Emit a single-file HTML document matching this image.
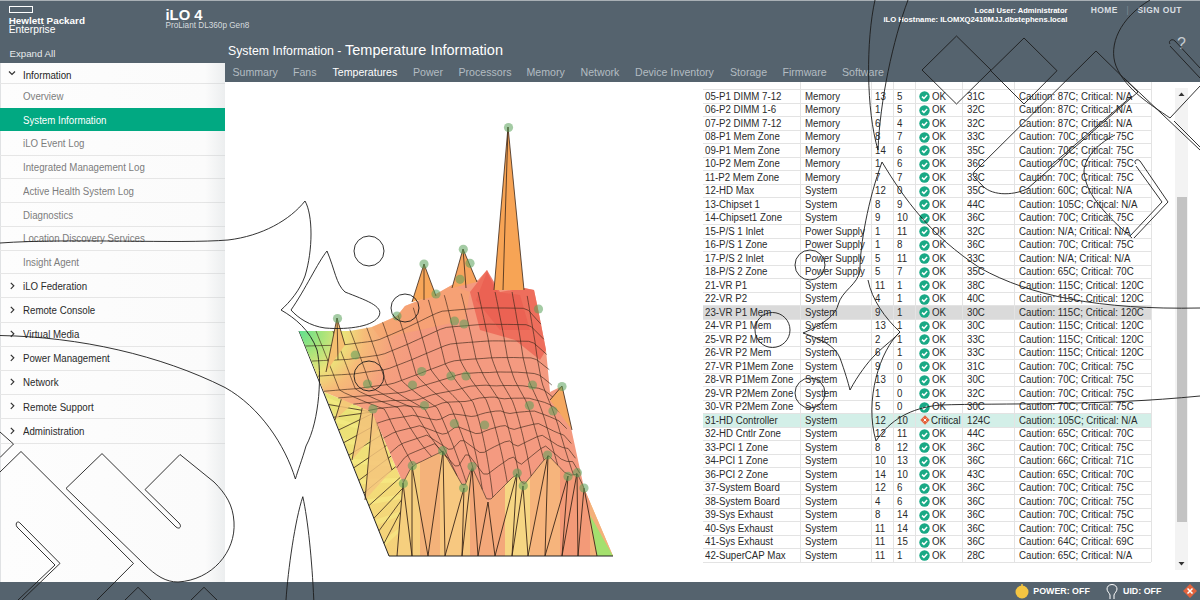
<!DOCTYPE html>
<html><head><meta charset="utf-8">
<style>
*{margin:0;padding:0;box-sizing:border-box}
html,body{width:1200px;height:600px;overflow:hidden;background:#fff;font-family:"Liberation Sans",sans-serif}
.a{position:absolute}
</style></head><body>
<div class="a" style="left:0;top:0;width:1200px;height:63px;background:#55636e"></div>
<div class="a" style="left:0;top:0;width:1200px;height:1px;background:#a9b0b5"></div>
<div class="a" style="left:225px;top:63px;width:975px;height:19px;background:#55636e"></div>
<div class="a" style="left:0;top:582px;width:1200px;height:18px;background:#55636e"></div>
<div class="a" style="left:0;top:63px;width:225px;height:519px;background:linear-gradient(to right,#fdfdfd 0,#fbfbfb 205px,#eceeef 225px)"></div>
<div class="a" style="left:0;top:63px;width:1px;height:519px;background:#e0e2e4"></div>
<div style="position:absolute;left:0;top:108px;width:225px;height:23px;background:#01a982"></div>
<div style="position:absolute;left:0;top:82.5px;width:225px;height:1px;background:linear-gradient(to right,#e6e6e6,#e6e6e6 200px,#dcdedf)"></div>
<div style="position:absolute;left:0;top:154.5px;width:225px;height:1px;background:linear-gradient(to right,#e6e6e6,#e6e6e6 200px,#dcdedf)"></div>
<div style="position:absolute;left:0;top:178.25px;width:225px;height:1px;background:linear-gradient(to right,#e6e6e6,#e6e6e6 200px,#dcdedf)"></div>
<div style="position:absolute;left:0;top:202.0px;width:225px;height:1px;background:linear-gradient(to right,#e6e6e6,#e6e6e6 200px,#dcdedf)"></div>
<div style="position:absolute;left:0;top:225.5px;width:225px;height:1px;background:linear-gradient(to right,#e6e6e6,#e6e6e6 200px,#dcdedf)"></div>
<div style="position:absolute;left:0;top:249.5px;width:225px;height:1px;background:linear-gradient(to right,#e6e6e6,#e6e6e6 200px,#dcdedf)"></div>
<div style="position:absolute;left:0;top:273.25px;width:225px;height:1px;background:linear-gradient(to right,#e6e6e6,#e6e6e6 200px,#dcdedf)"></div>
<div style="position:absolute;left:0;top:297.0px;width:225px;height:1px;background:linear-gradient(to right,#e6e6e6,#e6e6e6 200px,#dcdedf)"></div>
<div style="position:absolute;left:0;top:321.5px;width:225px;height:1px;background:linear-gradient(to right,#e6e6e6,#e6e6e6 200px,#dcdedf)"></div>
<div style="position:absolute;left:0;top:345.75px;width:225px;height:1px;background:linear-gradient(to right,#e6e6e6,#e6e6e6 200px,#dcdedf)"></div>
<div style="position:absolute;left:0;top:369.5px;width:225px;height:1px;background:linear-gradient(to right,#e6e6e6,#e6e6e6 200px,#dcdedf)"></div>
<div style="position:absolute;left:0;top:393.75px;width:225px;height:1px;background:linear-gradient(to right,#e6e6e6,#e6e6e6 200px,#dcdedf)"></div>
<div style="position:absolute;left:0;top:417.75px;width:225px;height:1px;background:linear-gradient(to right,#e6e6e6,#e6e6e6 200px,#dcdedf)"></div>
<div style="position:absolute;left:0;top:442.8px;width:225px;height:1px;background:linear-gradient(to right,#e6e6e6,#e6e6e6 200px,#dcdedf)"></div>
<div style="position:absolute;left:23px;top:70.82px;font-size:10.21px;line-height:10.21px;color:#1e1e1e;white-space:nowrap;transform:scaleX(0.9500);transform-origin:0 0;">Information</div>
<svg style="position:absolute;left:7px;top:70.0px" width="10" height="7"><path d="M2 1.5 L5 4.5 L8 1.5" fill="none" stroke="#333" stroke-width="1.2"/></svg>
<div style="position:absolute;left:23px;top:91.82px;font-size:10.21px;line-height:10.21px;color:#7c7c7c;white-space:nowrap;transform:scaleX(0.9500);transform-origin:0 0;">Overview</div>
<div style="position:absolute;left:23px;top:115.82px;font-size:10.21px;line-height:10.21px;color:#ffffff;white-space:nowrap;transform:scaleX(0.9500);transform-origin:0 0;">System Information</div>
<div style="position:absolute;left:23px;top:139.32px;font-size:10.21px;line-height:10.21px;color:#7c7c7c;white-space:nowrap;transform:scaleX(0.9500);transform-origin:0 0;">iLO Event Log</div>
<div style="position:absolute;left:23px;top:163.20px;font-size:10.21px;line-height:10.21px;color:#7c7c7c;white-space:nowrap;transform:scaleX(0.9500);transform-origin:0 0;">Integrated Management Log</div>
<div style="position:absolute;left:23px;top:186.95px;font-size:10.21px;line-height:10.21px;color:#7c7c7c;white-space:nowrap;transform:scaleX(0.9500);transform-origin:0 0;">Active Health System Log</div>
<div style="position:absolute;left:23px;top:210.57px;font-size:10.21px;line-height:10.21px;color:#7c7c7c;white-space:nowrap;transform:scaleX(0.9500);transform-origin:0 0;">Diagnostics</div>
<div style="position:absolute;left:23px;top:234.32px;font-size:10.21px;line-height:10.21px;color:#7c7c7c;white-space:nowrap;transform:scaleX(0.9500);transform-origin:0 0;">Location Discovery Services</div>
<div style="position:absolute;left:23px;top:258.20px;font-size:10.21px;line-height:10.21px;color:#7c7c7c;white-space:nowrap;transform:scaleX(0.9500);transform-origin:0 0;">Insight Agent</div>
<div style="position:absolute;left:23px;top:281.95px;font-size:10.21px;line-height:10.21px;color:#2a2a2a;white-space:nowrap;transform:scaleX(0.9500);transform-origin:0 0;">iLO Federation</div>
<svg style="position:absolute;left:9px;top:280.625px" width="7" height="10"><path d="M1.8 1.8 L4.8 4.8 L1.8 7.8" fill="none" stroke="#333" stroke-width="1.2"/></svg>
<div style="position:absolute;left:23px;top:306.07px;font-size:10.21px;line-height:10.21px;color:#2a2a2a;white-space:nowrap;transform:scaleX(0.9500);transform-origin:0 0;">Remote Console</div>
<svg style="position:absolute;left:9px;top:304.75px" width="7" height="10"><path d="M1.8 1.8 L4.8 4.8 L1.8 7.8" fill="none" stroke="#333" stroke-width="1.2"/></svg>
<div style="position:absolute;left:23px;top:330.45px;font-size:10.21px;line-height:10.21px;color:#2a2a2a;white-space:nowrap;transform:scaleX(0.9500);transform-origin:0 0;">Virtual Media</div>
<svg style="position:absolute;left:9px;top:329.125px" width="7" height="10"><path d="M1.8 1.8 L4.8 4.8 L1.8 7.8" fill="none" stroke="#333" stroke-width="1.2"/></svg>
<div style="position:absolute;left:23px;top:354.45px;font-size:10.21px;line-height:10.21px;color:#2a2a2a;white-space:nowrap;transform:scaleX(0.9500);transform-origin:0 0;">Power Management</div>
<svg style="position:absolute;left:9px;top:353.125px" width="7" height="10"><path d="M1.8 1.8 L4.8 4.8 L1.8 7.8" fill="none" stroke="#333" stroke-width="1.2"/></svg>
<div style="position:absolute;left:23px;top:378.45px;font-size:10.21px;line-height:10.21px;color:#2a2a2a;white-space:nowrap;transform:scaleX(0.9500);transform-origin:0 0;">Network</div>
<svg style="position:absolute;left:9px;top:377.125px" width="7" height="10"><path d="M1.8 1.8 L4.8 4.8 L1.8 7.8" fill="none" stroke="#333" stroke-width="1.2"/></svg>
<div style="position:absolute;left:23px;top:402.57px;font-size:10.21px;line-height:10.21px;color:#2a2a2a;white-space:nowrap;transform:scaleX(0.9500);transform-origin:0 0;">Remote Support</div>
<svg style="position:absolute;left:9px;top:401.25px" width="7" height="10"><path d="M1.8 1.8 L4.8 4.8 L1.8 7.8" fill="none" stroke="#333" stroke-width="1.2"/></svg>
<div style="position:absolute;left:23px;top:427.10px;font-size:10.21px;line-height:10.21px;color:#2a2a2a;white-space:nowrap;transform:scaleX(0.9500);transform-origin:0 0;">Administration</div>
<svg style="position:absolute;left:9px;top:425.775px" width="7" height="10"><path d="M1.8 1.8 L4.8 4.8 L1.8 7.8" fill="none" stroke="#333" stroke-width="1.2"/></svg>
<div class="a" style="left:9px;top:6.2px;width:23.5px;height:6.8px;border:1.5px solid #fff"></div>
<div style="position:absolute;left:8.7px;top:15.58px;font-size:9.90px;line-height:9.90px;color:#fff;font-weight:bold;white-space:nowrap;">Hewlett Packard</div>
<div style="position:absolute;left:8.7px;top:25.29px;font-size:10.25px;line-height:10.25px;color:#fff;white-space:nowrap;">Enterprise</div>
<div style="position:absolute;left:9.5px;top:49.26px;font-size:9.70px;line-height:9.70px;color:#e8ebed;white-space:nowrap;">Expand All</div>
<div style="position:absolute;left:165.5px;top:7.62px;font-size:14.80px;line-height:14.80px;color:#fff;font-weight:bold;white-space:nowrap;">iLO 4</div>
<div style="position:absolute;left:165.5px;top:22.33px;font-size:8.20px;line-height:8.20px;color:#d6dbde;white-space:nowrap;">ProLiant DL360p Gen8</div>
<div style="position:absolute;right:132.5px;text-align:right;top:6.54px;font-size:7.60px;line-height:7.60px;color:#fff;font-weight:bold;white-space:nowrap;">Local User: Administrator</div>
<div style="position:absolute;right:132.5px;text-align:right;top:15.96px;font-size:7.70px;line-height:7.70px;color:#fff;font-weight:bold;white-space:nowrap;">iLO Hostname: ILOMXQ2410MJJ.dbstephens.local</div>
<div style="position:absolute;left:1090.75px;top:5.78px;font-size:8.50px;line-height:8.50px;color:#d9dee1;font-weight:bold;white-space:nowrap;letter-spacing:0.4px">HOME</div>
<div style="position:absolute;left:1126.5px;top:5.78px;font-size:8.50px;line-height:8.50px;color:#7d8a92;white-space:nowrap;">|</div>
<div style="position:absolute;left:1137.5px;top:5.78px;font-size:8.50px;line-height:8.50px;color:#d9dee1;font-weight:bold;white-space:nowrap;letter-spacing:0.4px">SIGN OUT</div>
<div style="position:absolute;left:1177px;top:36.40px;font-size:16.00px;line-height:16.00px;color:#c5ccd1;white-space:nowrap;">?</div>
<div style="position:absolute;left:228px;top:45.05px;font-size:12.30px;line-height:12.30px;color:#fff;white-space:nowrap;">System Information - </div>
<div style="position:absolute;left:345px;top:43.17px;font-size:14.50px;line-height:14.50px;color:#fff;white-space:nowrap;">Temperature Information</div>
<div style="position:absolute;left:232.5px;top:66.69px;font-size:10.60px;line-height:10.60px;color:#b3bcc2;white-space:nowrap;">Summary</div>
<div style="position:absolute;left:293px;top:66.69px;font-size:10.60px;line-height:10.60px;color:#b3bcc2;white-space:nowrap;">Fans</div>
<div style="position:absolute;left:332.5px;top:66.69px;font-size:10.60px;line-height:10.60px;color:#fff;white-space:nowrap;">Temperatures</div>
<div style="position:absolute;left:413px;top:66.69px;font-size:10.60px;line-height:10.60px;color:#b3bcc2;white-space:nowrap;">Power</div>
<div style="position:absolute;left:458.5px;top:66.69px;font-size:10.60px;line-height:10.60px;color:#b3bcc2;white-space:nowrap;">Processors</div>
<div style="position:absolute;left:526.5px;top:66.69px;font-size:10.60px;line-height:10.60px;color:#b3bcc2;white-space:nowrap;">Memory</div>
<div style="position:absolute;left:580.5px;top:66.69px;font-size:10.60px;line-height:10.60px;color:#b3bcc2;white-space:nowrap;">Network</div>
<div style="position:absolute;left:635px;top:66.69px;font-size:10.60px;line-height:10.60px;color:#b3bcc2;white-space:nowrap;">Device Inventory</div>
<div style="position:absolute;left:730px;top:66.69px;font-size:10.60px;line-height:10.60px;color:#b3bcc2;white-space:nowrap;">Storage</div>
<div style="position:absolute;left:782.5px;top:66.69px;font-size:10.60px;line-height:10.60px;color:#b3bcc2;white-space:nowrap;">Firmware</div>
<div style="position:absolute;left:842px;top:66.69px;font-size:10.60px;line-height:10.60px;color:#b3bcc2;white-space:nowrap;">Software</div>
<svg class="a" style="left:0;top:0" width="1200" height="600"><defs>
<linearGradient id="gsk" x1="324" y1="392" x2="400" y2="556" gradientUnits="userSpaceOnUse"><stop offset="0" stop-color="#e6e476"/><stop offset="0.5" stop-color="#f2df78"/><stop offset="1" stop-color="#f5cf7a"/></linearGradient>
<radialGradient id="gsurf" cx="299" cy="331" r="120" gradientUnits="userSpaceOnUse"><stop offset="0" stop-color="#5fe090"/><stop offset="0.2" stop-color="#a8e47a"/><stop offset="0.38" stop-color="#ece27a"/><stop offset="0.55" stop-color="#f6bb78"/><stop offset="0.8" stop-color="#f5a07e"/><stop offset="1" stop-color="#f49a80"/></radialGradient>
</defs>
<polygon points="324.0,392.0 372.0,412.0 403.0,483.0 397.0,556.0 389.0,556.0" fill="url(#gsk)"/>
<polygon points="325.9,396.9 373.6,415.7 375.4,419.8 328.1,402.2" fill="#f7ef86" opacity="0.55"/>
<polygon points="334.1,417.4 380.4,431.3 382.2,435.3 336.2,422.8" fill="#f7ef86" opacity="0.55"/>
<polygon points="342.2,437.9 387.2,446.8 389.0,450.8 344.3,443.2" fill="#f7ef86" opacity="0.55"/>
<polygon points="350.3,458.4 394.0,462.3 395.7,466.4 352.4,463.8" fill="#f7ef86" opacity="0.55"/>
<polygon points="358.4,478.9 400.8,477.9 402.5,481.9 360.6,484.2" fill="#f7ef86" opacity="0.55"/>
<polygon points="366.6,499.4 402.1,494.3 401.7,498.7 368.7,504.8" fill="#f7ef86" opacity="0.55"/>
<polygon points="374.7,519.9 400.7,511.2 400.3,515.6 376.8,525.2" fill="#f7ef86" opacity="0.55"/>
<polygon points="382.8,540.4 399.3,528.1 398.9,532.5 384.9,545.8" fill="#f7ef86" opacity="0.55"/>
<path d="M329.0,404.6 L372.0,412.0 M334.0,417.2 L372.0,412.0 M339.0,429.8 L372.6,413.5 M344.0,442.5 L377.3,424.1 M349.0,455.1 L381.9,434.7 M354.0,467.7 L386.6,445.4 M359.0,480.3 L391.2,456.0 M364.0,492.9 L395.8,466.6 M369.0,505.5 L400.5,477.2 M374.0,518.2 L402.6,488.3 M379.0,530.8 L401.6,499.8 M384.0,543.4 L400.7,511.4" fill="none" stroke="#3a2619" stroke-width="0.8"/>
<polygon points="335.0,420.0 355.0,354.0 362.0,395.0" fill="#f4c478" opacity="0.85"/>
<path d="M335,420 L355,354 L362,395" fill="none" stroke="#3a2619" stroke-width="0.8"/>
<polygon points="352.0,460.0 367.0,383.0 378.0,430.0" fill="#f3c27a" opacity="0.85"/>
<path d="M352,460 L367,383 L378,430" fill="none" stroke="#3a2619" stroke-width="0.8"/>
<polygon points="365.0,500.0 373.0,409.0 392.0,470.0" fill="#f5c57c" opacity="0.85"/>
<path d="M365,500 L373,409 L392,470" fill="none" stroke="#3a2619" stroke-width="0.8"/>
<polygon points="403.0,483.0 412.0,466.0 443.0,451.0 464.0,488.0 472.0,467.0 488.0,502.0 517.0,473.0 523.0,486.0 548.0,455.0 568.0,476.0 577.0,473.0 584.0,488.0 613.0,556.0 397.0,556.0" fill="#f7bd7c"/>
<defs><clipPath id="fs"><polygon points="403.0,483.0 412.0,466.0 443.0,451.0 464.0,488.0 472.0,467.0 488.0,502.0 517.0,473.0 523.0,486.0 548.0,455.0 568.0,476.0 577.0,473.0 584.0,488.0 613.0,556.0 397.0,556.0"/></clipPath></defs><g clip-path="url(#fs)">
<rect x="397" y="440" width="23" height="120" fill="#f6cf7e"/>
<rect x="420" y="440" width="20" height="120" fill="#f4b27a"/>
<rect x="440" y="440" width="30" height="120" fill="#f7c880"/>
<rect x="470" y="440" width="35" height="120" fill="#f4a87a"/>
<rect x="505" y="440" width="25" height="120" fill="#f6d683"/>
<rect x="530" y="440" width="30" height="120" fill="#f6b47c"/>
<rect x="560" y="440" width="30" height="120" fill="#f39a78"/>
<rect x="590" y="440" width="23" height="120" fill="#f4b07a"/>
</g>
<polygon points="590.0,515.0 613.0,556.0 597.0,556.0" fill="#a4e06e"/>
<path d="M397,556 L403,483 L412,556 M412,556 L412,466 L428,556 M428,556 L443,451 L445,556 M445,556 L464,488 L462,556 M462,556 L472,467 L478,556 M478,556 L488,502 L495,556 M495,556 L517,473 L512,556 M512,556 L523,486 L528,556 M528,556 L548,455 L545,556 M545,556 L568,476 L562,556 M562,556 L577,473 L578,556 M578,556 L584,488 L597,556" fill="none" stroke="#3a2619" stroke-width="0.9"/>
<path d="M299,331 L389,556 L613,556" fill="none" stroke="#222" stroke-width="1"/>
<polygon points="299.0,331.0 337.0,331.0 350.0,331.0 372.0,327.0 397.0,316.0 405.0,306.0 420.0,300.0 436.0,294.0 452.0,285.0 478.0,280.0 487.0,270.0 494.0,288.0 524.0,288.0 534.0,290.0 538.0,309.0 546.0,350.0 550.0,392.0 562.0,386.0 584.0,488.0 577.0,473.0 568.0,476.0 548.0,455.0 523.0,486.0 517.0,473.0 488.0,502.0 472.0,467.0 464.0,488.0 443.0,451.0 412.0,466.0 403.0,483.0 372.0,412.0 324.0,392.0 311.0,360.0" fill="url(#gsurf)"/>
<polygon points="470.0,292.0 487.0,270.0 500.0,292.0 524.0,288.0 534.0,290.0 538.0,309.0 546.0,350.0 540.0,360.0 515.0,340.0 480.0,330.0" fill="#ec6656" opacity="0.85"/>
<polygon points="476.0,300.0 487.0,272.0 498.0,292.0 520.0,295.0 530.0,330.0 500.0,330.0" fill="#e95a4c" opacity="0.6"/>
<polygon points="372.0,327.0 397.0,316.0 405.0,306.0 420.0,300.0 436.0,294.0 452.0,285.0 470.0,292.0 465.0,320.0 420.0,330.0 380.0,338.0" fill="#f6a66e" opacity="0.6"/><path d="M316.0,331.0 L318.3,336.8 L320.7,342.7 L323.1,348.5 L325.4,354.4 L327.8,360.3 L330.1,366.3 L332.5,372.2 L334.8,378.1 L337.1,384.0 L339.4,389.9 L344.6,392.9 L350.3,395.4 L355.9,397.9 L361.5,400.3 L367.2,402.6 L372.9,404.9 L378.6,407.0 L384.3,409.1 L387.1,414.1 L389.6,419.2 L392.0,424.3 L394.4,429.3 L396.8,434.2 L399.2,439.0 L401.6,443.7 L403.9,448.3 L406.3,452.7 L408.6,457.1 L410.9,461.3 L413.1,465.5 M332.9,331.0 L335.2,336.6 L337.4,342.3 L339.7,348.0 L341.9,353.8 L344.2,359.6 L346.4,365.4 L348.6,371.3 L350.8,377.1 L353.0,382.9 L355.2,388.7 L360.1,391.8 L365.5,394.4 L370.8,396.9 L376.2,399.3 L381.7,401.6 L387.2,403.7 L392.7,405.8 L398.2,407.7 L401.2,412.2 L403.8,416.9 L406.5,421.5 L409.1,425.9 L411.8,430.2 L414.5,434.4 L417.2,438.4 L420.0,442.3 L422.8,446.1 L425.7,449.7 L428.6,453.2 L431.6,456.5 M349.8,329.5 L352.0,335.0 L354.1,340.6 L356.2,346.2 L358.3,351.9 L360.5,357.7 L362.6,363.5 L364.7,369.3 L366.8,375.1 L368.8,380.9 L370.9,386.7 L375.5,389.9 L380.5,392.7 L385.5,395.5 L390.6,398.1 L395.8,400.5 L401.1,402.8 L406.4,405.1 L411.8,407.1 L414.7,411.6 L417.4,416.2 L420.1,420.7 L422.8,425.2 L425.6,429.5 L428.4,433.8 L431.3,438.0 L434.2,442.1 L437.2,446.1 L440.4,450.1 L443.6,454.0 L446.9,457.8 M366.7,327.6 L368.7,333.0 L370.7,338.5 L372.7,344.1 L374.7,349.8 L376.7,355.5 L378.7,361.3 L380.7,367.1 L382.7,373.0 L384.6,378.8 L386.6,384.7 L390.8,388.2 L395.4,391.4 L400.0,394.5 L404.7,397.5 L409.7,400.4 L414.7,403.2 L419.6,406.0 L424.6,408.7 L427.4,413.6 L430.0,418.8 L432.5,424.0 L435.1,429.3 L437.6,434.7 L440.2,440.1 L442.9,445.6 L445.6,451.2 L448.3,457.0 L451.1,463.0 L454.0,469.2 L457.0,475.6 M382.6,322.3 L384.6,327.8 L386.5,333.3 L388.4,339.0 L390.3,344.7 L392.3,350.6 L394.2,356.5 L396.0,362.4 L397.9,368.4 L399.7,374.4 L401.6,380.4 L405.5,384.3 L409.8,387.8 L414.0,391.3 L418.4,394.7 L423.0,398.0 L427.7,401.2 L432.3,404.4 L437.0,407.6 L439.7,412.8 L442.1,418.3 L444.5,423.9 L446.8,429.5 L449.1,435.3 L451.5,441.3 L453.9,447.4 L456.3,453.8 L458.7,460.4 L461.2,467.4 L463.7,474.6 L466.2,482.2 M398.1,315.4 L400.0,321.0 L401.8,326.7 L403.7,332.5 L405.5,338.4 L407.4,344.4 L409.2,350.4 L411.0,356.5 L412.8,362.7 L414.5,368.8 L416.3,374.9 L419.9,379.1 L423.8,383.0 L427.7,386.8 L431.7,390.4 L436.0,393.9 L440.4,397.3 L444.7,400.6 L449.0,403.8 L451.5,408.8 L453.7,414.0 L455.9,419.2 L457.9,424.5 L460.0,429.8 L462.0,435.2 L464.0,440.7 L466.0,446.3 L468.0,452.2 L469.9,458.2 L471.9,464.4 L473.8,470.9 M413.3,307.7 L415.0,313.4 L416.8,319.3 L418.6,325.3 L420.4,331.4 L422.2,337.6 L424.0,343.9 L425.7,350.2 L427.4,356.6 L429.1,363.0 L430.7,369.4 L434.1,374.1 L437.6,378.5 L441.1,382.9 L444.9,387.2 L448.9,391.4 L452.9,395.5 L457.0,399.6 L460.9,403.7 L463.3,409.5 L465.4,415.6 L467.4,421.7 L469.2,428.1 L471.0,434.7 L472.8,441.4 L474.5,448.5 L476.2,455.9 L477.8,463.6 L479.4,471.8 L480.9,480.4 L482.3,489.5 M428.4,299.9 L430.1,305.9 L431.8,312.0 L433.5,318.2 L435.3,324.5 L437.0,330.9 L438.7,337.4 L440.4,344.0 L442.0,350.6 L443.6,357.2 L445.2,363.8 L448.2,369.0 L451.5,374.0 L454.7,378.9 L458.1,383.7 L461.9,388.4 L465.7,393.1 L469.4,397.8 L473.1,402.5 L475.4,408.8 L477.5,415.3 L479.4,422.0 L481.1,428.9 L482.8,436.1 L484.4,443.6 L486.0,451.4 L487.5,459.6 L488.9,468.2 L490.3,477.3 L491.6,487.0 L492.8,497.2 M444.3,295.2 L446.0,301.3 L447.6,307.5 L449.3,313.9 L450.9,320.3 L452.5,326.8 L454.2,333.4 L455.8,340.1 L457.3,346.8 L458.8,353.5 L460.3,360.2 L463.0,365.6 L466.0,370.8 L468.9,375.9 L472.0,381.0 L475.6,385.8 L479.1,390.5 L482.7,395.2 L486.2,399.9 L488.5,405.9 L490.6,411.9 L492.6,418.1 L494.4,424.4 L496.1,430.9 L497.8,437.5 L499.5,444.3 L501.2,451.4 L502.8,458.7 L504.3,466.4 L505.8,474.4 L507.3,482.7 M461.2,293.6 L462.8,299.8 L464.3,306.0 L465.8,312.4 L467.3,318.9 L468.8,325.5 L470.3,332.1 L471.8,338.8 L473.2,345.5 L474.6,352.2 L476.0,358.9 L478.4,364.5 L481.0,369.9 L483.5,375.3 L486.3,380.5 L489.6,385.5 L492.9,390.5 L496.1,395.4 L499.4,400.2 L501.6,406.1 L503.7,412.0 L505.6,418.1 L507.3,424.2 L509.0,430.5 L510.7,436.8 L512.3,443.3 L513.9,450.0 L515.4,456.9 L516.9,464.0 L518.4,471.4 L519.8,479.1 M478.1,292.0 L479.5,298.3 L480.9,304.6 L482.3,311.1 L483.7,317.6 L485.1,324.2 L486.5,330.9 L487.9,337.6 L489.1,344.3 L490.4,351.0 L491.7,357.7 L493.7,363.5 L495.9,369.2 L498.1,374.8 L500.5,380.3 L503.5,385.5 L506.5,390.7 L509.5,395.8 L512.4,400.8 L514.5,406.6 L516.5,412.5 L518.3,418.4 L519.9,424.4 L521.5,430.5 L523.0,436.6 L524.4,442.8 L525.9,449.1 L527.3,455.6 L528.6,462.2 L529.9,469.0 L531.1,476.0 M495.1,292.0 L496.4,298.3 L497.7,304.7 L498.9,311.2 L500.2,317.8 L501.5,324.4 L502.8,331.0 L504.0,337.6 L505.1,344.3 L506.3,350.9 L507.4,357.6 L509.1,363.5 L511.0,369.2 L512.8,374.9 L514.9,380.4 L517.6,385.6 L520.3,390.7 L523.0,395.7 L525.7,400.5 L527.7,405.9 L529.7,411.2 L531.4,416.4 L533.0,421.6 L534.5,426.7 L535.9,431.7 L537.4,436.6 L538.8,441.5 L540.1,446.2 L541.5,450.9 L542.7,455.5 L544.0,460.0 M512.1,292.0 L513.2,298.4 L514.4,304.9 L515.6,311.4 L516.7,318.0 L517.9,324.6 L519.0,331.2 L520.1,337.8 L521.1,344.5 L522.1,351.1 L523.1,357.7 L524.6,363.9 L526.0,369.9 L527.5,375.9 L529.3,381.7 L531.7,387.2 L534.2,392.6 L536.6,397.9 L539.0,403.2 L541.1,408.7 L543.0,414.2 L544.8,419.7 L546.3,425.1 L547.8,430.4 L549.3,435.6 L550.7,440.8 L552.2,445.9 L553.6,450.8 L555.0,455.7 L556.4,460.5 L557.7,465.2 M527.2,295.9 L528.3,302.3 L529.4,308.7 L530.5,315.2 L531.6,321.6 L532.7,328.1 L533.8,334.6 L534.9,341.1 L535.8,347.6 L536.7,354.1 L537.7,360.6 L538.9,366.9 L540.0,373.1 L541.2,379.2 L542.8,385.2 L545.1,391.0 L547.3,396.7 L549.6,402.4 L551.9,408.0 L554.0,413.7 L556.1,419.4 L558.0,425.1 L559.6,430.8 L561.3,436.5 L563.0,442.1 L564.6,447.6 L566.3,453.1 L568.0,458.5 L569.8,463.8 L571.5,469.1 L573.3,474.2 M305.2,346.0 L311.5,345.9 L317.7,345.7 L324.0,345.5 L330.2,345.4 L336.5,345.2 L342.7,345.0 L348.9,344.2 L355.2,343.4 L361.4,342.6 L367.6,341.8 L373.8,341.0 L379.8,339.4 L385.5,336.9 L391.3,334.5 L397.0,332.0 L402.8,329.5 L408.4,326.8 L414.0,324.1 L419.6,321.4 L425.2,318.6 L430.8,315.9 L436.4,313.3 L442.2,311.2 L448.4,310.7 L454.7,310.1 L460.9,309.6 L467.1,309.1 L473.3,308.5 L479.6,308.0 L485.8,307.9 L492.1,307.9 L498.3,308.0 L504.6,308.0 L510.8,308.1 L517.1,308.2 L523.3,308.3 L528.6,310.4 L532.7,315.0 L536.8,319.6 L541.0,324.2 M311.4,361.1 L317.6,360.8 L323.7,360.5 L329.9,360.2 L336.0,360.0 L342.1,359.7 L348.3,359.4 L354.4,358.5 L360.5,357.7 L366.6,356.9 L372.7,356.0 L378.8,355.2 L384.7,353.7 L390.4,351.3 L396.0,349.0 L401.7,346.7 L407.4,344.4 L412.9,341.8 L418.5,339.3 L424.0,336.7 L429.6,334.2 L435.1,331.7 L440.7,329.2 L446.4,327.4 L452.5,326.8 L458.7,326.3 L464.8,325.8 L470.9,325.3 L477.0,324.8 L483.1,324.4 L489.2,324.2 L495.4,324.3 L501.5,324.4 L507.6,324.4 L513.8,324.5 L519.9,324.6 L526.1,324.7 L531.3,326.7 L535.5,330.9 L539.7,335.1 L543.9,339.3 M317.6,376.2 L323.6,375.8 L329.6,375.4 L335.6,375.0 L341.7,374.7 L347.7,374.3 L353.7,374.0 L359.7,373.1 L365.7,372.2 L371.7,371.4 L377.7,370.6 L383.7,369.8 L389.5,368.3 L395.1,366.1 L400.7,364.0 L406.3,361.8 L411.9,359.6 L417.4,357.3 L422.9,354.9 L428.4,352.6 L433.9,350.3 L439.4,348.0 L444.9,345.7 L450.5,344.0 L456.5,343.4 L462.5,342.9 L468.5,342.4 L474.5,342.0 L480.5,341.5 L486.5,341.1 L492.5,340.9 L498.6,340.9 L504.6,341.0 L510.6,341.0 L516.6,341.1 L522.7,341.2 L528.7,341.3 L533.9,343.1 L538.2,346.9 L542.5,350.7 L546.7,354.5 M323.7,391.3 L329.6,390.8 L335.5,390.3 L341.4,389.8 L347.3,389.3 L353.2,388.9 L359.2,388.4 L365.1,387.5 L370.9,386.7 L376.8,385.9 L382.7,385.2 L388.5,384.4 L394.2,383.1 L399.7,381.1 L405.3,379.0 L410.8,376.9 L416.3,374.9 L421.7,372.8 L427.1,370.7 L432.5,368.7 L437.9,366.7 L443.4,364.6 L448.8,362.4 L454.4,360.8 L460.3,360.2 L466.2,359.6 L472.1,359.1 L477.9,358.8 L483.8,358.4 L489.7,357.9 L495.6,357.7 L501.5,357.6 L507.4,357.6 L513.3,357.5 L519.2,357.7 L525.1,357.8 L531.0,357.9 L536.2,359.5 L540.6,362.8 L544.9,366.3 L549.3,369.7 M338.3,398.0 L343.8,397.5 L349.4,397.0 L355.0,396.5 L360.6,396.1 L366.2,395.7 L371.9,395.4 L377.5,394.6 L383.0,394.1 L388.5,393.7 L394.0,393.2 L399.6,392.8 L404.9,391.9 L410.2,390.2 L415.3,388.3 L420.5,386.5 L425.7,384.9 L430.8,383.3 L436.0,381.8 L441.1,380.2 L446.2,378.7 L451.3,377.0 L456.5,375.2 L461.8,373.8 L467.4,373.4 L473.0,373.0 L478.6,372.6 L484.1,372.6 L489.6,372.5 L495.1,372.1 L500.7,372.0 L506.3,372.1 L511.9,372.1 L517.4,372.2 L523.0,372.6 L528.6,373.0 L534.2,373.5 L539.2,375.1 L543.5,378.2 L547.7,381.6 L551.8,385.0 M353.3,404.2 L358.5,403.6 L363.7,403.0 L369.0,402.5 L374.4,402.1 L379.9,401.7 L385.3,401.3 L390.6,400.6 L395.8,400.5 L401.0,400.4 L406.2,400.4 L411.4,400.4 L416.5,399.9 L421.4,398.6 L426.3,396.8 L431.2,395.1 L436.0,393.9 L440.9,392.9 L445.7,392.0 L450.5,391.1 L455.3,390.2 L460.2,389.0 L465.2,387.4 L470.3,386.2 L475.6,385.8 L480.9,385.4 L486.2,385.2 L491.3,385.7 L496.5,385.9 L501.8,385.6 L507.1,385.5 L512.3,385.6 L517.6,385.6 L522.9,385.8 L528.2,386.6 L533.5,387.5 L538.8,388.3 L543.6,390.1 L547.9,393.0 L551.9,396.4 L555.9,399.8 M368.4,410.5 L373.2,409.6 L378.1,408.6 L383.2,407.9 L388.5,407.4 L393.7,406.9 L399.0,406.4 L404.2,405.7 L409.1,406.1 L414.0,406.5 L418.9,407.0 L423.8,407.5 L428.5,407.6 L433.2,406.6 L437.7,404.8 L442.3,403.0 L446.8,402.2 L451.4,402.0 L455.9,401.8 L460.5,401.6 L465.0,401.5 L469.7,400.7 L474.5,399.2 L479.4,398.0 L484.5,397.6 L489.5,397.2 L494.6,397.1 L499.4,398.2 L504.3,398.8 L509.3,398.4 L514.3,398.2 L519.3,398.2 L524.3,398.1 L529.4,398.3 L534.4,399.7 L539.5,401.0 L544.6,402.4 L549.3,404.4 L553.6,407.0 L557.5,410.6 L561.3,414.2 M376.9,423.3 L381.6,421.7 L386.3,420.2 L391.3,418.9 L396.7,418.0 L402.0,417.2 L407.4,416.3 L412.7,415.3 L417.4,416.2 L422.1,417.2 L426.9,418.2 L431.6,419.2 L436.2,419.9 L440.7,419.1 L445.0,416.8 L449.3,414.6 L453.7,414.0 L458.1,414.5 L462.5,415.1 L466.9,415.8 L471.2,416.5 L475.9,415.9 L480.7,414.2 L485.6,412.8 L490.6,411.9 L495.7,411.1 L500.6,410.9 L505.2,412.6 L509.9,413.5 L514.9,412.7 L519.8,412.1 L524.7,411.7 L529.7,411.2 L534.6,411.1 L539.7,413.0 L544.7,414.8 L549.7,416.7 L554.5,418.8 L559.1,421.0 L562.9,424.9 L566.8,428.7 M383.5,438.2 L388.0,435.7 L392.5,433.2 L397.5,431.3 L403.0,429.9 L408.6,428.5 L414.1,427.2 L419.6,425.7 L424.2,427.4 L428.7,429.1 L433.3,430.8 L437.8,432.6 L442.3,434.1 L446.6,433.4 L450.7,430.5 L454.8,427.5 L459.0,427.1 L463.1,428.7 L467.3,430.3 L471.5,431.9 L475.7,433.6 L480.3,433.2 L485.2,431.0 L490.2,429.1 L495.3,427.6 L500.3,426.2 L505.3,425.6 L509.6,428.2 L514.2,429.4 L519.1,427.9 L523.9,426.6 L528.8,425.4 L533.7,424.2 L538.6,423.6 L543.7,426.1 L548.7,428.6 L553.7,431.1 L558.8,433.3 L563.7,435.0 L567.5,439.2 L571.3,443.5 M390.0,453.2 L394.2,449.5 L398.5,445.8 L403.5,443.0 L409.4,441.0 L415.2,439.1 L421.1,437.1 L426.9,435.1 L431.3,438.0 L435.6,440.8 L440.0,443.7 L444.3,446.6 L448.6,449.3 L452.6,448.8 L456.4,444.8 L460.1,440.8 L464.0,440.7 L467.9,443.6 L471.9,446.5 L475.8,449.5 L479.8,452.5 L484.3,452.3 L489.3,449.4 L494.4,446.7 L499.5,444.3 L504.7,441.9 L509.6,440.9 L513.7,444.5 L518.0,446.1 L522.8,443.6 L527.7,441.2 L532.5,438.9 L537.4,436.6 L542.3,435.3 L547.3,438.6 L552.4,441.9 L557.5,445.3 L562.8,447.5 L568.1,448.5 L571.8,453.4 L575.5,458.3 M396.5,468.1 L400.4,463.0 L404.4,457.9 L409.5,454.1 L415.8,451.4 L422.1,448.8 L428.4,446.2 L434.7,443.7 L438.8,448.1 L442.9,452.5 L447.0,457.0 L451.1,461.5 L455.1,466.0 L458.8,465.7 L462.1,460.3 L465.5,454.9 L468.9,455.1 L472.6,459.8 L476.2,464.5 L479.8,469.3 L483.4,474.0 L487.9,474.0 L493.1,470.1 L498.3,466.2 L503.6,462.5 L508.8,458.8 L513.7,457.0 L517.4,462.1 L521.5,464.2 L526.3,460.2 L531.2,456.3 L536.0,452.4 L540.8,448.6 L545.7,446.1 L550.8,450.4 L556.0,454.7 L561.2,459.1 L566.8,461.4 L572.7,461.6 L576.2,467.4 L579.8,473.2 M403.0,483.0 L406.6,476.2 L410.2,469.4 L415.4,464.3 L422.4,461.0 L429.3,457.6 L436.2,454.3 L443.1,451.1 L446.9,457.8 L450.6,464.5 L454.4,471.1 L458.2,477.8 L462.0,484.5 L465.3,484.6 L468.0,477.4 L470.8,470.2 L473.8,470.9 L477.0,477.9 L480.2,484.8 L483.4,491.8 L486.5,498.8 L491.0,499.0 L496.4,493.6 L501.8,488.2 L507.3,482.7 L512.7,477.3 L517.7,474.5 L520.9,481.4 L524.7,483.9 L529.5,478.0 L534.3,472.0 L539.1,466.0 L544.0,460.0 L548.9,455.9 L554.2,461.5 L559.5,467.0 L564.8,472.6 L570.8,475.1 L577.5,474.1 L580.8,481.0 L584.0,488.0" fill="none" stroke="#3a2619" stroke-width="0.75" opacity="0.85"/><polygon points="326.0,372.0 337.0,318.0 345.0,345.0" fill="#f5bf70"/><path d="M326,372 L337,318 L345,345 M338,360 L337,318" fill="none" stroke="#3a2619" stroke-width="0.8"/>
<polygon points="412.0,302.0 424.0,264.0 436.0,296.0" fill="#f7a659"/><path d="M412,302 L424,264 L436,296 M424,300 L424,264" fill="none" stroke="#3a2619" stroke-width="0.8"/>
<polygon points="452.0,288.0 463.0,249.0 477.0,282.0" fill="#f7a35e"/><path d="M452,288 L463,249 L477,282 M466,288 L463,249" fill="none" stroke="#3a2619" stroke-width="0.8"/>
<polygon points="494.0,290.0 508.0,127.0 524.0,290.0" fill="#f7a455"/><path d="M494,290 L508,127 L524,290 M503,290 L508,127" fill="none" stroke="#3a2619" stroke-width="0.8"/>
<polygon points="550.0,400.0 562.0,386.0 572.0,430.0" fill="#f5a860"/><path d="M550,400 L562,386 L572,430" fill="none" stroke="#3a2619" stroke-width="0.8"/><circle cx="337.5" cy="318.5" r="4.6" fill="#5aa05a" fill-opacity="0.55"/>
<circle cx="397" cy="316" r="4.6" fill="#5aa05a" fill-opacity="0.55"/>
<circle cx="454.5" cy="321" r="4.6" fill="#5aa05a" fill-opacity="0.55"/>
<circle cx="464" cy="324" r="4.6" fill="#5aa05a" fill-opacity="0.55"/>
<circle cx="538.5" cy="309" r="4.6" fill="#5aa05a" fill-opacity="0.55"/>
<circle cx="355.3" cy="355" r="4.6" fill="#5aa05a" fill-opacity="0.55"/>
<circle cx="367.5" cy="384" r="4.6" fill="#5aa05a" fill-opacity="0.55"/>
<circle cx="373" cy="409" r="4.6" fill="#5aa05a" fill-opacity="0.55"/>
<circle cx="421.7" cy="371.5" r="4.6" fill="#5aa05a" fill-opacity="0.55"/>
<circle cx="412.5" cy="385" r="4.6" fill="#5aa05a" fill-opacity="0.55"/>
<circle cx="451" cy="376" r="4.6" fill="#5aa05a" fill-opacity="0.55"/>
<circle cx="466" cy="376" r="4.6" fill="#5aa05a" fill-opacity="0.55"/>
<circle cx="532.5" cy="385" r="4.6" fill="#5aa05a" fill-opacity="0.55"/>
<circle cx="562" cy="386.5" r="4.6" fill="#5aa05a" fill-opacity="0.55"/>
<circle cx="424.5" cy="405.5" r="4.6" fill="#5aa05a" fill-opacity="0.55"/>
<circle cx="529.4" cy="405.5" r="4.6" fill="#5aa05a" fill-opacity="0.55"/>
<circle cx="553" cy="411" r="4.6" fill="#5aa05a" fill-opacity="0.55"/>
<circle cx="454.3" cy="423.7" r="4.6" fill="#5aa05a" fill-opacity="0.55"/>
<circle cx="484.6" cy="425" r="4.6" fill="#5aa05a" fill-opacity="0.55"/>
<circle cx="442.6" cy="450.7" r="4.6" fill="#5aa05a" fill-opacity="0.55"/>
<circle cx="412.3" cy="465.7" r="4.6" fill="#5aa05a" fill-opacity="0.55"/>
<circle cx="403.4" cy="483.4" r="4.6" fill="#5aa05a" fill-opacity="0.55"/>
<circle cx="472" cy="466.6" r="4.6" fill="#5aa05a" fill-opacity="0.55"/>
<circle cx="463.6" cy="488" r="4.6" fill="#5aa05a" fill-opacity="0.55"/>
<circle cx="517.2" cy="473" r="4.6" fill="#5aa05a" fill-opacity="0.55"/>
<circle cx="523.3" cy="485.7" r="4.6" fill="#5aa05a" fill-opacity="0.55"/>
<circle cx="547.6" cy="455" r="4.6" fill="#5aa05a" fill-opacity="0.55"/>
<circle cx="568" cy="476.4" r="4.6" fill="#5aa05a" fill-opacity="0.55"/>
<circle cx="577.4" cy="472.7" r="4.6" fill="#5aa05a" fill-opacity="0.55"/>
<circle cx="584" cy="488" r="4.6" fill="#5aa05a" fill-opacity="0.55"/>
<circle cx="424" cy="264" r="4.6" fill="#5aa05a" fill-opacity="0.55"/>
<circle cx="463.3" cy="249.3" r="4.6" fill="#5aa05a" fill-opacity="0.55"/>
<circle cx="470" cy="263.3" r="4.6" fill="#5aa05a" fill-opacity="0.55"/>
<circle cx="460" cy="279.3" r="4.6" fill="#5aa05a" fill-opacity="0.55"/>
<circle cx="436" cy="294" r="4.6" fill="#5aa05a" fill-opacity="0.55"/>
<circle cx="508.5" cy="127.5" r="4.6" fill="#5aa05a" fill-opacity="0.55"/></svg>
<div style="position:absolute;left:703px;top:305.5px;width:448px;height:13.5px;background:#dadada"></div>
<div style="position:absolute;left:703px;top:413.5px;width:448px;height:13.5px;background:#d3efe8"></div>
<div style="position:absolute;left:800px;top:82px;width:1px;height:480.0px;background:#e3e3e3"></div>
<div style="position:absolute;left:871px;top:82px;width:1px;height:480.0px;background:#e3e3e3"></div>
<div style="position:absolute;left:893px;top:82px;width:1px;height:480.0px;background:#e3e3e3"></div>
<div style="position:absolute;left:915px;top:82px;width:1px;height:480.0px;background:#e3e3e3"></div>
<div style="position:absolute;left:962px;top:82px;width:1px;height:480.0px;background:#e3e3e3"></div>
<div style="position:absolute;left:1014px;top:82px;width:1px;height:480.0px;background:#e3e3e3"></div>
<div style="position:absolute;left:1151px;top:82px;width:1px;height:480.0px;background:#e3e3e3"></div>
<div style="position:absolute;left:703px;top:89.0px;width:448px;height:1px;background:#e3e3e3"></div>
<div style="position:absolute;left:703px;top:102.5px;width:448px;height:1px;background:#e3e3e3"></div>
<div style="position:absolute;left:703px;top:116.0px;width:448px;height:1px;background:#e3e3e3"></div>
<div style="position:absolute;left:703px;top:129.5px;width:448px;height:1px;background:#e3e3e3"></div>
<div style="position:absolute;left:703px;top:143.0px;width:448px;height:1px;background:#e3e3e3"></div>
<div style="position:absolute;left:703px;top:156.5px;width:448px;height:1px;background:#e3e3e3"></div>
<div style="position:absolute;left:703px;top:170.0px;width:448px;height:1px;background:#e3e3e3"></div>
<div style="position:absolute;left:703px;top:183.5px;width:448px;height:1px;background:#e3e3e3"></div>
<div style="position:absolute;left:703px;top:197.0px;width:448px;height:1px;background:#e3e3e3"></div>
<div style="position:absolute;left:703px;top:210.5px;width:448px;height:1px;background:#e3e3e3"></div>
<div style="position:absolute;left:703px;top:224.0px;width:448px;height:1px;background:#e3e3e3"></div>
<div style="position:absolute;left:703px;top:237.5px;width:448px;height:1px;background:#e3e3e3"></div>
<div style="position:absolute;left:703px;top:251.0px;width:448px;height:1px;background:#e3e3e3"></div>
<div style="position:absolute;left:703px;top:264.5px;width:448px;height:1px;background:#e3e3e3"></div>
<div style="position:absolute;left:703px;top:278.0px;width:448px;height:1px;background:#e3e3e3"></div>
<div style="position:absolute;left:703px;top:291.5px;width:448px;height:1px;background:#e3e3e3"></div>
<div style="position:absolute;left:703px;top:305.0px;width:448px;height:1px;background:#e3e3e3"></div>
<div style="position:absolute;left:703px;top:318.5px;width:448px;height:1px;background:#e3e3e3"></div>
<div style="position:absolute;left:703px;top:332.0px;width:448px;height:1px;background:#e3e3e3"></div>
<div style="position:absolute;left:703px;top:345.5px;width:448px;height:1px;background:#e3e3e3"></div>
<div style="position:absolute;left:703px;top:359.0px;width:448px;height:1px;background:#e3e3e3"></div>
<div style="position:absolute;left:703px;top:372.5px;width:448px;height:1px;background:#e3e3e3"></div>
<div style="position:absolute;left:703px;top:386.0px;width:448px;height:1px;background:#e3e3e3"></div>
<div style="position:absolute;left:703px;top:399.5px;width:448px;height:1px;background:#e3e3e3"></div>
<div style="position:absolute;left:703px;top:413.0px;width:448px;height:1px;background:#e3e3e3"></div>
<div style="position:absolute;left:703px;top:426.5px;width:448px;height:1px;background:#e3e3e3"></div>
<div style="position:absolute;left:703px;top:440.0px;width:448px;height:1px;background:#e3e3e3"></div>
<div style="position:absolute;left:703px;top:453.5px;width:448px;height:1px;background:#e3e3e3"></div>
<div style="position:absolute;left:703px;top:467.0px;width:448px;height:1px;background:#e3e3e3"></div>
<div style="position:absolute;left:703px;top:480.5px;width:448px;height:1px;background:#e3e3e3"></div>
<div style="position:absolute;left:703px;top:494.0px;width:448px;height:1px;background:#e3e3e3"></div>
<div style="position:absolute;left:703px;top:507.5px;width:448px;height:1px;background:#e3e3e3"></div>
<div style="position:absolute;left:703px;top:521.0px;width:448px;height:1px;background:#e3e3e3"></div>
<div style="position:absolute;left:703px;top:534.5px;width:448px;height:1px;background:#e3e3e3"></div>
<div style="position:absolute;left:703px;top:548.0px;width:448px;height:1px;background:#e3e3e3"></div>
<div style="position:absolute;left:703px;top:561.5px;width:448px;height:1px;background:#e3e3e3"></div>
<div style="position:absolute;left:705px;top:91.92px;font-size:10.21px;line-height:10.21px;color:#2a2a2a;white-space:nowrap;transform:scaleX(0.9500);transform-origin:0 0;">05-P1 DIMM 7-12</div>
<div style="position:absolute;left:805px;top:91.92px;font-size:10.21px;line-height:10.21px;color:#2a2a2a;white-space:nowrap;transform:scaleX(0.9500);transform-origin:0 0;">Memory</div>
<div style="position:absolute;left:875px;top:91.92px;font-size:10.21px;line-height:10.21px;color:#2a2a2a;white-space:nowrap;transform:scaleX(0.9500);transform-origin:0 0;">13</div>
<div style="position:absolute;left:897px;top:91.92px;font-size:10.21px;line-height:10.21px;color:#2a2a2a;white-space:nowrap;transform:scaleX(0.9500);transform-origin:0 0;">5</div>
<div style="position:absolute;left:967px;top:91.92px;font-size:10.21px;line-height:10.21px;color:#2a2a2a;white-space:nowrap;transform:scaleX(0.9500);transform-origin:0 0;">31C</div>
<div style="position:absolute;left:1019px;top:91.92px;font-size:10.21px;line-height:10.21px;color:#2a2a2a;white-space:nowrap;transform:scaleX(0.9500);transform-origin:0 0;">Caution: 87C; Critical: N/A</div>
<svg style="position:absolute;left:919px;top:91.2px" width="11" height="11"><circle cx="5.5" cy="5.5" r="5.2" fill="#19a985"/><path d="M3 5.6 L4.9 7.4 L8.1 4" fill="none" stroke="#fff" stroke-width="1.5"/></svg>
<div style="position:absolute;left:932px;top:91.92px;font-size:10.21px;line-height:10.21px;color:#2a2a2a;white-space:nowrap;transform:scaleX(0.9500);transform-origin:0 0;">OK</div>
<div style="position:absolute;left:705px;top:105.42px;font-size:10.21px;line-height:10.21px;color:#2a2a2a;white-space:nowrap;transform:scaleX(0.9500);transform-origin:0 0;">06-P2 DIMM 1-6</div>
<div style="position:absolute;left:805px;top:105.42px;font-size:10.21px;line-height:10.21px;color:#2a2a2a;white-space:nowrap;transform:scaleX(0.9500);transform-origin:0 0;">Memory</div>
<div style="position:absolute;left:875px;top:105.42px;font-size:10.21px;line-height:10.21px;color:#2a2a2a;white-space:nowrap;transform:scaleX(0.9500);transform-origin:0 0;">1</div>
<div style="position:absolute;left:897px;top:105.42px;font-size:10.21px;line-height:10.21px;color:#2a2a2a;white-space:nowrap;transform:scaleX(0.9500);transform-origin:0 0;">5</div>
<div style="position:absolute;left:967px;top:105.42px;font-size:10.21px;line-height:10.21px;color:#2a2a2a;white-space:nowrap;transform:scaleX(0.9500);transform-origin:0 0;">32C</div>
<div style="position:absolute;left:1019px;top:105.42px;font-size:10.21px;line-height:10.21px;color:#2a2a2a;white-space:nowrap;transform:scaleX(0.9500);transform-origin:0 0;">Caution: 87C; Critical: N/A</div>
<svg style="position:absolute;left:919px;top:104.7px" width="11" height="11"><circle cx="5.5" cy="5.5" r="5.2" fill="#19a985"/><path d="M3 5.6 L4.9 7.4 L8.1 4" fill="none" stroke="#fff" stroke-width="1.5"/></svg>
<div style="position:absolute;left:932px;top:105.42px;font-size:10.21px;line-height:10.21px;color:#2a2a2a;white-space:nowrap;transform:scaleX(0.9500);transform-origin:0 0;">OK</div>
<div style="position:absolute;left:705px;top:118.92px;font-size:10.21px;line-height:10.21px;color:#2a2a2a;white-space:nowrap;transform:scaleX(0.9500);transform-origin:0 0;">07-P2 DIMM 7-12</div>
<div style="position:absolute;left:805px;top:118.92px;font-size:10.21px;line-height:10.21px;color:#2a2a2a;white-space:nowrap;transform:scaleX(0.9500);transform-origin:0 0;">Memory</div>
<div style="position:absolute;left:875px;top:118.92px;font-size:10.21px;line-height:10.21px;color:#2a2a2a;white-space:nowrap;transform:scaleX(0.9500);transform-origin:0 0;">6</div>
<div style="position:absolute;left:897px;top:118.92px;font-size:10.21px;line-height:10.21px;color:#2a2a2a;white-space:nowrap;transform:scaleX(0.9500);transform-origin:0 0;">4</div>
<div style="position:absolute;left:967px;top:118.92px;font-size:10.21px;line-height:10.21px;color:#2a2a2a;white-space:nowrap;transform:scaleX(0.9500);transform-origin:0 0;">32C</div>
<div style="position:absolute;left:1019px;top:118.92px;font-size:10.21px;line-height:10.21px;color:#2a2a2a;white-space:nowrap;transform:scaleX(0.9500);transform-origin:0 0;">Caution: 87C; Critical: N/A</div>
<svg style="position:absolute;left:919px;top:118.2px" width="11" height="11"><circle cx="5.5" cy="5.5" r="5.2" fill="#19a985"/><path d="M3 5.6 L4.9 7.4 L8.1 4" fill="none" stroke="#fff" stroke-width="1.5"/></svg>
<div style="position:absolute;left:932px;top:118.92px;font-size:10.21px;line-height:10.21px;color:#2a2a2a;white-space:nowrap;transform:scaleX(0.9500);transform-origin:0 0;">OK</div>
<div style="position:absolute;left:705px;top:132.42px;font-size:10.21px;line-height:10.21px;color:#2a2a2a;white-space:nowrap;transform:scaleX(0.9500);transform-origin:0 0;">08-P1 Mem Zone</div>
<div style="position:absolute;left:805px;top:132.42px;font-size:10.21px;line-height:10.21px;color:#2a2a2a;white-space:nowrap;transform:scaleX(0.9500);transform-origin:0 0;">Memory</div>
<div style="position:absolute;left:875px;top:132.42px;font-size:10.21px;line-height:10.21px;color:#2a2a2a;white-space:nowrap;transform:scaleX(0.9500);transform-origin:0 0;">8</div>
<div style="position:absolute;left:897px;top:132.42px;font-size:10.21px;line-height:10.21px;color:#2a2a2a;white-space:nowrap;transform:scaleX(0.9500);transform-origin:0 0;">7</div>
<div style="position:absolute;left:967px;top:132.42px;font-size:10.21px;line-height:10.21px;color:#2a2a2a;white-space:nowrap;transform:scaleX(0.9500);transform-origin:0 0;">33C</div>
<div style="position:absolute;left:1019px;top:132.42px;font-size:10.21px;line-height:10.21px;color:#2a2a2a;white-space:nowrap;transform:scaleX(0.9500);transform-origin:0 0;">Caution: 70C; Critical: 75C</div>
<svg style="position:absolute;left:919px;top:131.7px" width="11" height="11"><circle cx="5.5" cy="5.5" r="5.2" fill="#19a985"/><path d="M3 5.6 L4.9 7.4 L8.1 4" fill="none" stroke="#fff" stroke-width="1.5"/></svg>
<div style="position:absolute;left:932px;top:132.42px;font-size:10.21px;line-height:10.21px;color:#2a2a2a;white-space:nowrap;transform:scaleX(0.9500);transform-origin:0 0;">OK</div>
<div style="position:absolute;left:705px;top:145.92px;font-size:10.21px;line-height:10.21px;color:#2a2a2a;white-space:nowrap;transform:scaleX(0.9500);transform-origin:0 0;">09-P1 Mem Zone</div>
<div style="position:absolute;left:805px;top:145.92px;font-size:10.21px;line-height:10.21px;color:#2a2a2a;white-space:nowrap;transform:scaleX(0.9500);transform-origin:0 0;">Memory</div>
<div style="position:absolute;left:875px;top:145.92px;font-size:10.21px;line-height:10.21px;color:#2a2a2a;white-space:nowrap;transform:scaleX(0.9500);transform-origin:0 0;">14</div>
<div style="position:absolute;left:897px;top:145.92px;font-size:10.21px;line-height:10.21px;color:#2a2a2a;white-space:nowrap;transform:scaleX(0.9500);transform-origin:0 0;">6</div>
<div style="position:absolute;left:967px;top:145.92px;font-size:10.21px;line-height:10.21px;color:#2a2a2a;white-space:nowrap;transform:scaleX(0.9500);transform-origin:0 0;">35C</div>
<div style="position:absolute;left:1019px;top:145.92px;font-size:10.21px;line-height:10.21px;color:#2a2a2a;white-space:nowrap;transform:scaleX(0.9500);transform-origin:0 0;">Caution: 70C; Critical: 75C</div>
<svg style="position:absolute;left:919px;top:145.2px" width="11" height="11"><circle cx="5.5" cy="5.5" r="5.2" fill="#19a985"/><path d="M3 5.6 L4.9 7.4 L8.1 4" fill="none" stroke="#fff" stroke-width="1.5"/></svg>
<div style="position:absolute;left:932px;top:145.92px;font-size:10.21px;line-height:10.21px;color:#2a2a2a;white-space:nowrap;transform:scaleX(0.9500);transform-origin:0 0;">OK</div>
<div style="position:absolute;left:705px;top:159.42px;font-size:10.21px;line-height:10.21px;color:#2a2a2a;white-space:nowrap;transform:scaleX(0.9500);transform-origin:0 0;">10-P2 Mem Zone</div>
<div style="position:absolute;left:805px;top:159.42px;font-size:10.21px;line-height:10.21px;color:#2a2a2a;white-space:nowrap;transform:scaleX(0.9500);transform-origin:0 0;">Memory</div>
<div style="position:absolute;left:875px;top:159.42px;font-size:10.21px;line-height:10.21px;color:#2a2a2a;white-space:nowrap;transform:scaleX(0.9500);transform-origin:0 0;">1</div>
<div style="position:absolute;left:897px;top:159.42px;font-size:10.21px;line-height:10.21px;color:#2a2a2a;white-space:nowrap;transform:scaleX(0.9500);transform-origin:0 0;">6</div>
<div style="position:absolute;left:967px;top:159.42px;font-size:10.21px;line-height:10.21px;color:#2a2a2a;white-space:nowrap;transform:scaleX(0.9500);transform-origin:0 0;">36C</div>
<div style="position:absolute;left:1019px;top:159.42px;font-size:10.21px;line-height:10.21px;color:#2a2a2a;white-space:nowrap;transform:scaleX(0.9500);transform-origin:0 0;">Caution: 70C; Critical: 75C</div>
<svg style="position:absolute;left:919px;top:158.7px" width="11" height="11"><circle cx="5.5" cy="5.5" r="5.2" fill="#19a985"/><path d="M3 5.6 L4.9 7.4 L8.1 4" fill="none" stroke="#fff" stroke-width="1.5"/></svg>
<div style="position:absolute;left:932px;top:159.42px;font-size:10.21px;line-height:10.21px;color:#2a2a2a;white-space:nowrap;transform:scaleX(0.9500);transform-origin:0 0;">OK</div>
<div style="position:absolute;left:705px;top:172.92px;font-size:10.21px;line-height:10.21px;color:#2a2a2a;white-space:nowrap;transform:scaleX(0.9500);transform-origin:0 0;">11-P2 Mem Zone</div>
<div style="position:absolute;left:805px;top:172.92px;font-size:10.21px;line-height:10.21px;color:#2a2a2a;white-space:nowrap;transform:scaleX(0.9500);transform-origin:0 0;">Memory</div>
<div style="position:absolute;left:875px;top:172.92px;font-size:10.21px;line-height:10.21px;color:#2a2a2a;white-space:nowrap;transform:scaleX(0.9500);transform-origin:0 0;">7</div>
<div style="position:absolute;left:897px;top:172.92px;font-size:10.21px;line-height:10.21px;color:#2a2a2a;white-space:nowrap;transform:scaleX(0.9500);transform-origin:0 0;">7</div>
<div style="position:absolute;left:967px;top:172.92px;font-size:10.21px;line-height:10.21px;color:#2a2a2a;white-space:nowrap;transform:scaleX(0.9500);transform-origin:0 0;">33C</div>
<div style="position:absolute;left:1019px;top:172.92px;font-size:10.21px;line-height:10.21px;color:#2a2a2a;white-space:nowrap;transform:scaleX(0.9500);transform-origin:0 0;">Caution: 70C; Critical: 75C</div>
<svg style="position:absolute;left:919px;top:172.2px" width="11" height="11"><circle cx="5.5" cy="5.5" r="5.2" fill="#19a985"/><path d="M3 5.6 L4.9 7.4 L8.1 4" fill="none" stroke="#fff" stroke-width="1.5"/></svg>
<div style="position:absolute;left:932px;top:172.92px;font-size:10.21px;line-height:10.21px;color:#2a2a2a;white-space:nowrap;transform:scaleX(0.9500);transform-origin:0 0;">OK</div>
<div style="position:absolute;left:705px;top:186.42px;font-size:10.21px;line-height:10.21px;color:#2a2a2a;white-space:nowrap;transform:scaleX(0.9500);transform-origin:0 0;">12-HD Max</div>
<div style="position:absolute;left:805px;top:186.42px;font-size:10.21px;line-height:10.21px;color:#2a2a2a;white-space:nowrap;transform:scaleX(0.9500);transform-origin:0 0;">System</div>
<div style="position:absolute;left:875px;top:186.42px;font-size:10.21px;line-height:10.21px;color:#2a2a2a;white-space:nowrap;transform:scaleX(0.9500);transform-origin:0 0;">12</div>
<div style="position:absolute;left:897px;top:186.42px;font-size:10.21px;line-height:10.21px;color:#2a2a2a;white-space:nowrap;transform:scaleX(0.9500);transform-origin:0 0;">0</div>
<div style="position:absolute;left:967px;top:186.42px;font-size:10.21px;line-height:10.21px;color:#2a2a2a;white-space:nowrap;transform:scaleX(0.9500);transform-origin:0 0;">35C</div>
<div style="position:absolute;left:1019px;top:186.42px;font-size:10.21px;line-height:10.21px;color:#2a2a2a;white-space:nowrap;transform:scaleX(0.9500);transform-origin:0 0;">Caution: 60C; Critical: N/A</div>
<svg style="position:absolute;left:919px;top:185.7px" width="11" height="11"><circle cx="5.5" cy="5.5" r="5.2" fill="#19a985"/><path d="M3 5.6 L4.9 7.4 L8.1 4" fill="none" stroke="#fff" stroke-width="1.5"/></svg>
<div style="position:absolute;left:932px;top:186.42px;font-size:10.21px;line-height:10.21px;color:#2a2a2a;white-space:nowrap;transform:scaleX(0.9500);transform-origin:0 0;">OK</div>
<div style="position:absolute;left:705px;top:199.92px;font-size:10.21px;line-height:10.21px;color:#2a2a2a;white-space:nowrap;transform:scaleX(0.9500);transform-origin:0 0;">13-Chipset 1</div>
<div style="position:absolute;left:805px;top:199.92px;font-size:10.21px;line-height:10.21px;color:#2a2a2a;white-space:nowrap;transform:scaleX(0.9500);transform-origin:0 0;">System</div>
<div style="position:absolute;left:875px;top:199.92px;font-size:10.21px;line-height:10.21px;color:#2a2a2a;white-space:nowrap;transform:scaleX(0.9500);transform-origin:0 0;">8</div>
<div style="position:absolute;left:897px;top:199.92px;font-size:10.21px;line-height:10.21px;color:#2a2a2a;white-space:nowrap;transform:scaleX(0.9500);transform-origin:0 0;">9</div>
<div style="position:absolute;left:967px;top:199.92px;font-size:10.21px;line-height:10.21px;color:#2a2a2a;white-space:nowrap;transform:scaleX(0.9500);transform-origin:0 0;">44C</div>
<div style="position:absolute;left:1019px;top:199.92px;font-size:10.21px;line-height:10.21px;color:#2a2a2a;white-space:nowrap;transform:scaleX(0.9500);transform-origin:0 0;">Caution: 105C; Critical: N/A</div>
<svg style="position:absolute;left:919px;top:199.2px" width="11" height="11"><circle cx="5.5" cy="5.5" r="5.2" fill="#19a985"/><path d="M3 5.6 L4.9 7.4 L8.1 4" fill="none" stroke="#fff" stroke-width="1.5"/></svg>
<div style="position:absolute;left:932px;top:199.92px;font-size:10.21px;line-height:10.21px;color:#2a2a2a;white-space:nowrap;transform:scaleX(0.9500);transform-origin:0 0;">OK</div>
<div style="position:absolute;left:705px;top:213.42px;font-size:10.21px;line-height:10.21px;color:#2a2a2a;white-space:nowrap;transform:scaleX(0.9500);transform-origin:0 0;">14-Chipset1 Zone</div>
<div style="position:absolute;left:805px;top:213.42px;font-size:10.21px;line-height:10.21px;color:#2a2a2a;white-space:nowrap;transform:scaleX(0.9500);transform-origin:0 0;">System</div>
<div style="position:absolute;left:875px;top:213.42px;font-size:10.21px;line-height:10.21px;color:#2a2a2a;white-space:nowrap;transform:scaleX(0.9500);transform-origin:0 0;">9</div>
<div style="position:absolute;left:897px;top:213.42px;font-size:10.21px;line-height:10.21px;color:#2a2a2a;white-space:nowrap;transform:scaleX(0.9500);transform-origin:0 0;">10</div>
<div style="position:absolute;left:967px;top:213.42px;font-size:10.21px;line-height:10.21px;color:#2a2a2a;white-space:nowrap;transform:scaleX(0.9500);transform-origin:0 0;">36C</div>
<div style="position:absolute;left:1019px;top:213.42px;font-size:10.21px;line-height:10.21px;color:#2a2a2a;white-space:nowrap;transform:scaleX(0.9500);transform-origin:0 0;">Caution: 70C; Critical: 75C</div>
<svg style="position:absolute;left:919px;top:212.7px" width="11" height="11"><circle cx="5.5" cy="5.5" r="5.2" fill="#19a985"/><path d="M3 5.6 L4.9 7.4 L8.1 4" fill="none" stroke="#fff" stroke-width="1.5"/></svg>
<div style="position:absolute;left:932px;top:213.42px;font-size:10.21px;line-height:10.21px;color:#2a2a2a;white-space:nowrap;transform:scaleX(0.9500);transform-origin:0 0;">OK</div>
<div style="position:absolute;left:705px;top:226.92px;font-size:10.21px;line-height:10.21px;color:#2a2a2a;white-space:nowrap;transform:scaleX(0.9500);transform-origin:0 0;">15-P/S 1 Inlet</div>
<div style="position:absolute;left:805px;top:226.92px;font-size:10.21px;line-height:10.21px;color:#2a2a2a;white-space:nowrap;transform:scaleX(0.9500);transform-origin:0 0;">Power Supply</div>
<div style="position:absolute;left:875px;top:226.92px;font-size:10.21px;line-height:10.21px;color:#2a2a2a;white-space:nowrap;transform:scaleX(0.9500);transform-origin:0 0;">1</div>
<div style="position:absolute;left:897px;top:226.92px;font-size:10.21px;line-height:10.21px;color:#2a2a2a;white-space:nowrap;transform:scaleX(0.9500);transform-origin:0 0;">11</div>
<div style="position:absolute;left:967px;top:226.92px;font-size:10.21px;line-height:10.21px;color:#2a2a2a;white-space:nowrap;transform:scaleX(0.9500);transform-origin:0 0;">32C</div>
<div style="position:absolute;left:1019px;top:226.92px;font-size:10.21px;line-height:10.21px;color:#2a2a2a;white-space:nowrap;transform:scaleX(0.9500);transform-origin:0 0;">Caution: N/A; Critical: N/A</div>
<svg style="position:absolute;left:919px;top:226.2px" width="11" height="11"><circle cx="5.5" cy="5.5" r="5.2" fill="#19a985"/><path d="M3 5.6 L4.9 7.4 L8.1 4" fill="none" stroke="#fff" stroke-width="1.5"/></svg>
<div style="position:absolute;left:932px;top:226.92px;font-size:10.21px;line-height:10.21px;color:#2a2a2a;white-space:nowrap;transform:scaleX(0.9500);transform-origin:0 0;">OK</div>
<div style="position:absolute;left:705px;top:240.42px;font-size:10.21px;line-height:10.21px;color:#2a2a2a;white-space:nowrap;transform:scaleX(0.9500);transform-origin:0 0;">16-P/S 1 Zone</div>
<div style="position:absolute;left:805px;top:240.42px;font-size:10.21px;line-height:10.21px;color:#2a2a2a;white-space:nowrap;transform:scaleX(0.9500);transform-origin:0 0;">Power Supply</div>
<div style="position:absolute;left:875px;top:240.42px;font-size:10.21px;line-height:10.21px;color:#2a2a2a;white-space:nowrap;transform:scaleX(0.9500);transform-origin:0 0;">1</div>
<div style="position:absolute;left:897px;top:240.42px;font-size:10.21px;line-height:10.21px;color:#2a2a2a;white-space:nowrap;transform:scaleX(0.9500);transform-origin:0 0;">8</div>
<div style="position:absolute;left:967px;top:240.42px;font-size:10.21px;line-height:10.21px;color:#2a2a2a;white-space:nowrap;transform:scaleX(0.9500);transform-origin:0 0;">36C</div>
<div style="position:absolute;left:1019px;top:240.42px;font-size:10.21px;line-height:10.21px;color:#2a2a2a;white-space:nowrap;transform:scaleX(0.9500);transform-origin:0 0;">Caution: 70C; Critical: 75C</div>
<svg style="position:absolute;left:919px;top:239.7px" width="11" height="11"><circle cx="5.5" cy="5.5" r="5.2" fill="#19a985"/><path d="M3 5.6 L4.9 7.4 L8.1 4" fill="none" stroke="#fff" stroke-width="1.5"/></svg>
<div style="position:absolute;left:932px;top:240.42px;font-size:10.21px;line-height:10.21px;color:#2a2a2a;white-space:nowrap;transform:scaleX(0.9500);transform-origin:0 0;">OK</div>
<div style="position:absolute;left:705px;top:253.92px;font-size:10.21px;line-height:10.21px;color:#2a2a2a;white-space:nowrap;transform:scaleX(0.9500);transform-origin:0 0;">17-P/S 2 Inlet</div>
<div style="position:absolute;left:805px;top:253.92px;font-size:10.21px;line-height:10.21px;color:#2a2a2a;white-space:nowrap;transform:scaleX(0.9500);transform-origin:0 0;">Power Supply</div>
<div style="position:absolute;left:875px;top:253.92px;font-size:10.21px;line-height:10.21px;color:#2a2a2a;white-space:nowrap;transform:scaleX(0.9500);transform-origin:0 0;">5</div>
<div style="position:absolute;left:897px;top:253.92px;font-size:10.21px;line-height:10.21px;color:#2a2a2a;white-space:nowrap;transform:scaleX(0.9500);transform-origin:0 0;">11</div>
<div style="position:absolute;left:967px;top:253.92px;font-size:10.21px;line-height:10.21px;color:#2a2a2a;white-space:nowrap;transform:scaleX(0.9500);transform-origin:0 0;">33C</div>
<div style="position:absolute;left:1019px;top:253.92px;font-size:10.21px;line-height:10.21px;color:#2a2a2a;white-space:nowrap;transform:scaleX(0.9500);transform-origin:0 0;">Caution: N/A; Critical: N/A</div>
<svg style="position:absolute;left:919px;top:253.2px" width="11" height="11"><circle cx="5.5" cy="5.5" r="5.2" fill="#19a985"/><path d="M3 5.6 L4.9 7.4 L8.1 4" fill="none" stroke="#fff" stroke-width="1.5"/></svg>
<div style="position:absolute;left:932px;top:253.92px;font-size:10.21px;line-height:10.21px;color:#2a2a2a;white-space:nowrap;transform:scaleX(0.9500);transform-origin:0 0;">OK</div>
<div style="position:absolute;left:705px;top:267.42px;font-size:10.21px;line-height:10.21px;color:#2a2a2a;white-space:nowrap;transform:scaleX(0.9500);transform-origin:0 0;">18-P/S 2 Zone</div>
<div style="position:absolute;left:805px;top:267.42px;font-size:10.21px;line-height:10.21px;color:#2a2a2a;white-space:nowrap;transform:scaleX(0.9500);transform-origin:0 0;">Power Supply</div>
<div style="position:absolute;left:875px;top:267.42px;font-size:10.21px;line-height:10.21px;color:#2a2a2a;white-space:nowrap;transform:scaleX(0.9500);transform-origin:0 0;">5</div>
<div style="position:absolute;left:897px;top:267.42px;font-size:10.21px;line-height:10.21px;color:#2a2a2a;white-space:nowrap;transform:scaleX(0.9500);transform-origin:0 0;">7</div>
<div style="position:absolute;left:967px;top:267.42px;font-size:10.21px;line-height:10.21px;color:#2a2a2a;white-space:nowrap;transform:scaleX(0.9500);transform-origin:0 0;">35C</div>
<div style="position:absolute;left:1019px;top:267.42px;font-size:10.21px;line-height:10.21px;color:#2a2a2a;white-space:nowrap;transform:scaleX(0.9500);transform-origin:0 0;">Caution: 65C; Critical: 70C</div>
<svg style="position:absolute;left:919px;top:266.7px" width="11" height="11"><circle cx="5.5" cy="5.5" r="5.2" fill="#19a985"/><path d="M3 5.6 L4.9 7.4 L8.1 4" fill="none" stroke="#fff" stroke-width="1.5"/></svg>
<div style="position:absolute;left:932px;top:267.42px;font-size:10.21px;line-height:10.21px;color:#2a2a2a;white-space:nowrap;transform:scaleX(0.9500);transform-origin:0 0;">OK</div>
<div style="position:absolute;left:705px;top:280.92px;font-size:10.21px;line-height:10.21px;color:#2a2a2a;white-space:nowrap;transform:scaleX(0.9500);transform-origin:0 0;">21-VR P1</div>
<div style="position:absolute;left:805px;top:280.92px;font-size:10.21px;line-height:10.21px;color:#2a2a2a;white-space:nowrap;transform:scaleX(0.9500);transform-origin:0 0;">System</div>
<div style="position:absolute;left:875px;top:280.92px;font-size:10.21px;line-height:10.21px;color:#2a2a2a;white-space:nowrap;transform:scaleX(0.9500);transform-origin:0 0;">11</div>
<div style="position:absolute;left:897px;top:280.92px;font-size:10.21px;line-height:10.21px;color:#2a2a2a;white-space:nowrap;transform:scaleX(0.9500);transform-origin:0 0;">1</div>
<div style="position:absolute;left:967px;top:280.92px;font-size:10.21px;line-height:10.21px;color:#2a2a2a;white-space:nowrap;transform:scaleX(0.9500);transform-origin:0 0;">38C</div>
<div style="position:absolute;left:1019px;top:280.92px;font-size:10.21px;line-height:10.21px;color:#2a2a2a;white-space:nowrap;transform:scaleX(0.9500);transform-origin:0 0;">Caution: 115C; Critical: 120C</div>
<svg style="position:absolute;left:919px;top:280.2px" width="11" height="11"><circle cx="5.5" cy="5.5" r="5.2" fill="#19a985"/><path d="M3 5.6 L4.9 7.4 L8.1 4" fill="none" stroke="#fff" stroke-width="1.5"/></svg>
<div style="position:absolute;left:932px;top:280.92px;font-size:10.21px;line-height:10.21px;color:#2a2a2a;white-space:nowrap;transform:scaleX(0.9500);transform-origin:0 0;">OK</div>
<div style="position:absolute;left:705px;top:294.42px;font-size:10.21px;line-height:10.21px;color:#2a2a2a;white-space:nowrap;transform:scaleX(0.9500);transform-origin:0 0;">22-VR P2</div>
<div style="position:absolute;left:805px;top:294.42px;font-size:10.21px;line-height:10.21px;color:#2a2a2a;white-space:nowrap;transform:scaleX(0.9500);transform-origin:0 0;">System</div>
<div style="position:absolute;left:875px;top:294.42px;font-size:10.21px;line-height:10.21px;color:#2a2a2a;white-space:nowrap;transform:scaleX(0.9500);transform-origin:0 0;">4</div>
<div style="position:absolute;left:897px;top:294.42px;font-size:10.21px;line-height:10.21px;color:#2a2a2a;white-space:nowrap;transform:scaleX(0.9500);transform-origin:0 0;">1</div>
<div style="position:absolute;left:967px;top:294.42px;font-size:10.21px;line-height:10.21px;color:#2a2a2a;white-space:nowrap;transform:scaleX(0.9500);transform-origin:0 0;">40C</div>
<div style="position:absolute;left:1019px;top:294.42px;font-size:10.21px;line-height:10.21px;color:#2a2a2a;white-space:nowrap;transform:scaleX(0.9500);transform-origin:0 0;">Caution: 115C; Critical: 120C</div>
<svg style="position:absolute;left:919px;top:293.7px" width="11" height="11"><circle cx="5.5" cy="5.5" r="5.2" fill="#19a985"/><path d="M3 5.6 L4.9 7.4 L8.1 4" fill="none" stroke="#fff" stroke-width="1.5"/></svg>
<div style="position:absolute;left:932px;top:294.42px;font-size:10.21px;line-height:10.21px;color:#2a2a2a;white-space:nowrap;transform:scaleX(0.9500);transform-origin:0 0;">OK</div>
<div style="position:absolute;left:705px;top:307.92px;font-size:10.21px;line-height:10.21px;color:#2a2a2a;white-space:nowrap;transform:scaleX(0.9500);transform-origin:0 0;">23-VR P1 Mem</div>
<div style="position:absolute;left:805px;top:307.92px;font-size:10.21px;line-height:10.21px;color:#2a2a2a;white-space:nowrap;transform:scaleX(0.9500);transform-origin:0 0;">System</div>
<div style="position:absolute;left:875px;top:307.92px;font-size:10.21px;line-height:10.21px;color:#2a2a2a;white-space:nowrap;transform:scaleX(0.9500);transform-origin:0 0;">9</div>
<div style="position:absolute;left:897px;top:307.92px;font-size:10.21px;line-height:10.21px;color:#2a2a2a;white-space:nowrap;transform:scaleX(0.9500);transform-origin:0 0;">1</div>
<div style="position:absolute;left:967px;top:307.92px;font-size:10.21px;line-height:10.21px;color:#2a2a2a;white-space:nowrap;transform:scaleX(0.9500);transform-origin:0 0;">30C</div>
<div style="position:absolute;left:1019px;top:307.92px;font-size:10.21px;line-height:10.21px;color:#2a2a2a;white-space:nowrap;transform:scaleX(0.9500);transform-origin:0 0;">Caution: 115C; Critical: 120C</div>
<svg style="position:absolute;left:919px;top:307.2px" width="11" height="11"><circle cx="5.5" cy="5.5" r="5.2" fill="#19a985"/><path d="M3 5.6 L4.9 7.4 L8.1 4" fill="none" stroke="#fff" stroke-width="1.5"/></svg>
<div style="position:absolute;left:932px;top:307.92px;font-size:10.21px;line-height:10.21px;color:#2a2a2a;white-space:nowrap;transform:scaleX(0.9500);transform-origin:0 0;">OK</div>
<div style="position:absolute;left:705px;top:321.42px;font-size:10.21px;line-height:10.21px;color:#2a2a2a;white-space:nowrap;transform:scaleX(0.9500);transform-origin:0 0;">24-VR P1 Mem</div>
<div style="position:absolute;left:805px;top:321.42px;font-size:10.21px;line-height:10.21px;color:#2a2a2a;white-space:nowrap;transform:scaleX(0.9500);transform-origin:0 0;">System</div>
<div style="position:absolute;left:875px;top:321.42px;font-size:10.21px;line-height:10.21px;color:#2a2a2a;white-space:nowrap;transform:scaleX(0.9500);transform-origin:0 0;">13</div>
<div style="position:absolute;left:897px;top:321.42px;font-size:10.21px;line-height:10.21px;color:#2a2a2a;white-space:nowrap;transform:scaleX(0.9500);transform-origin:0 0;">1</div>
<div style="position:absolute;left:967px;top:321.42px;font-size:10.21px;line-height:10.21px;color:#2a2a2a;white-space:nowrap;transform:scaleX(0.9500);transform-origin:0 0;">30C</div>
<div style="position:absolute;left:1019px;top:321.42px;font-size:10.21px;line-height:10.21px;color:#2a2a2a;white-space:nowrap;transform:scaleX(0.9500);transform-origin:0 0;">Caution: 115C; Critical: 120C</div>
<svg style="position:absolute;left:919px;top:320.7px" width="11" height="11"><circle cx="5.5" cy="5.5" r="5.2" fill="#19a985"/><path d="M3 5.6 L4.9 7.4 L8.1 4" fill="none" stroke="#fff" stroke-width="1.5"/></svg>
<div style="position:absolute;left:932px;top:321.42px;font-size:10.21px;line-height:10.21px;color:#2a2a2a;white-space:nowrap;transform:scaleX(0.9500);transform-origin:0 0;">OK</div>
<div style="position:absolute;left:705px;top:334.92px;font-size:10.21px;line-height:10.21px;color:#2a2a2a;white-space:nowrap;transform:scaleX(0.9500);transform-origin:0 0;">25-VR P2 Mem</div>
<div style="position:absolute;left:805px;top:334.92px;font-size:10.21px;line-height:10.21px;color:#2a2a2a;white-space:nowrap;transform:scaleX(0.9500);transform-origin:0 0;">System</div>
<div style="position:absolute;left:875px;top:334.92px;font-size:10.21px;line-height:10.21px;color:#2a2a2a;white-space:nowrap;transform:scaleX(0.9500);transform-origin:0 0;">2</div>
<div style="position:absolute;left:897px;top:334.92px;font-size:10.21px;line-height:10.21px;color:#2a2a2a;white-space:nowrap;transform:scaleX(0.9500);transform-origin:0 0;">1</div>
<div style="position:absolute;left:967px;top:334.92px;font-size:10.21px;line-height:10.21px;color:#2a2a2a;white-space:nowrap;transform:scaleX(0.9500);transform-origin:0 0;">33C</div>
<div style="position:absolute;left:1019px;top:334.92px;font-size:10.21px;line-height:10.21px;color:#2a2a2a;white-space:nowrap;transform:scaleX(0.9500);transform-origin:0 0;">Caution: 115C; Critical: 120C</div>
<svg style="position:absolute;left:919px;top:334.2px" width="11" height="11"><circle cx="5.5" cy="5.5" r="5.2" fill="#19a985"/><path d="M3 5.6 L4.9 7.4 L8.1 4" fill="none" stroke="#fff" stroke-width="1.5"/></svg>
<div style="position:absolute;left:932px;top:334.92px;font-size:10.21px;line-height:10.21px;color:#2a2a2a;white-space:nowrap;transform:scaleX(0.9500);transform-origin:0 0;">OK</div>
<div style="position:absolute;left:705px;top:348.42px;font-size:10.21px;line-height:10.21px;color:#2a2a2a;white-space:nowrap;transform:scaleX(0.9500);transform-origin:0 0;">26-VR P2 Mem</div>
<div style="position:absolute;left:805px;top:348.42px;font-size:10.21px;line-height:10.21px;color:#2a2a2a;white-space:nowrap;transform:scaleX(0.9500);transform-origin:0 0;">System</div>
<div style="position:absolute;left:875px;top:348.42px;font-size:10.21px;line-height:10.21px;color:#2a2a2a;white-space:nowrap;transform:scaleX(0.9500);transform-origin:0 0;">6</div>
<div style="position:absolute;left:897px;top:348.42px;font-size:10.21px;line-height:10.21px;color:#2a2a2a;white-space:nowrap;transform:scaleX(0.9500);transform-origin:0 0;">1</div>
<div style="position:absolute;left:967px;top:348.42px;font-size:10.21px;line-height:10.21px;color:#2a2a2a;white-space:nowrap;transform:scaleX(0.9500);transform-origin:0 0;">33C</div>
<div style="position:absolute;left:1019px;top:348.42px;font-size:10.21px;line-height:10.21px;color:#2a2a2a;white-space:nowrap;transform:scaleX(0.9500);transform-origin:0 0;">Caution: 115C; Critical: 120C</div>
<svg style="position:absolute;left:919px;top:347.7px" width="11" height="11"><circle cx="5.5" cy="5.5" r="5.2" fill="#19a985"/><path d="M3 5.6 L4.9 7.4 L8.1 4" fill="none" stroke="#fff" stroke-width="1.5"/></svg>
<div style="position:absolute;left:932px;top:348.42px;font-size:10.21px;line-height:10.21px;color:#2a2a2a;white-space:nowrap;transform:scaleX(0.9500);transform-origin:0 0;">OK</div>
<div style="position:absolute;left:705px;top:361.92px;font-size:10.21px;line-height:10.21px;color:#2a2a2a;white-space:nowrap;transform:scaleX(0.9500);transform-origin:0 0;">27-VR P1Mem Zone</div>
<div style="position:absolute;left:805px;top:361.92px;font-size:10.21px;line-height:10.21px;color:#2a2a2a;white-space:nowrap;transform:scaleX(0.9500);transform-origin:0 0;">System</div>
<div style="position:absolute;left:875px;top:361.92px;font-size:10.21px;line-height:10.21px;color:#2a2a2a;white-space:nowrap;transform:scaleX(0.9500);transform-origin:0 0;">9</div>
<div style="position:absolute;left:897px;top:361.92px;font-size:10.21px;line-height:10.21px;color:#2a2a2a;white-space:nowrap;transform:scaleX(0.9500);transform-origin:0 0;">0</div>
<div style="position:absolute;left:967px;top:361.92px;font-size:10.21px;line-height:10.21px;color:#2a2a2a;white-space:nowrap;transform:scaleX(0.9500);transform-origin:0 0;">31C</div>
<div style="position:absolute;left:1019px;top:361.92px;font-size:10.21px;line-height:10.21px;color:#2a2a2a;white-space:nowrap;transform:scaleX(0.9500);transform-origin:0 0;">Caution: 70C; Critical: 75C</div>
<svg style="position:absolute;left:919px;top:361.2px" width="11" height="11"><circle cx="5.5" cy="5.5" r="5.2" fill="#19a985"/><path d="M3 5.6 L4.9 7.4 L8.1 4" fill="none" stroke="#fff" stroke-width="1.5"/></svg>
<div style="position:absolute;left:932px;top:361.92px;font-size:10.21px;line-height:10.21px;color:#2a2a2a;white-space:nowrap;transform:scaleX(0.9500);transform-origin:0 0;">OK</div>
<div style="position:absolute;left:705px;top:375.42px;font-size:10.21px;line-height:10.21px;color:#2a2a2a;white-space:nowrap;transform:scaleX(0.9500);transform-origin:0 0;">28-VR P1Mem Zone</div>
<div style="position:absolute;left:805px;top:375.42px;font-size:10.21px;line-height:10.21px;color:#2a2a2a;white-space:nowrap;transform:scaleX(0.9500);transform-origin:0 0;">System</div>
<div style="position:absolute;left:875px;top:375.42px;font-size:10.21px;line-height:10.21px;color:#2a2a2a;white-space:nowrap;transform:scaleX(0.9500);transform-origin:0 0;">13</div>
<div style="position:absolute;left:897px;top:375.42px;font-size:10.21px;line-height:10.21px;color:#2a2a2a;white-space:nowrap;transform:scaleX(0.9500);transform-origin:0 0;">0</div>
<div style="position:absolute;left:967px;top:375.42px;font-size:10.21px;line-height:10.21px;color:#2a2a2a;white-space:nowrap;transform:scaleX(0.9500);transform-origin:0 0;">30C</div>
<div style="position:absolute;left:1019px;top:375.42px;font-size:10.21px;line-height:10.21px;color:#2a2a2a;white-space:nowrap;transform:scaleX(0.9500);transform-origin:0 0;">Caution: 70C; Critical: 75C</div>
<svg style="position:absolute;left:919px;top:374.7px" width="11" height="11"><circle cx="5.5" cy="5.5" r="5.2" fill="#19a985"/><path d="M3 5.6 L4.9 7.4 L8.1 4" fill="none" stroke="#fff" stroke-width="1.5"/></svg>
<div style="position:absolute;left:932px;top:375.42px;font-size:10.21px;line-height:10.21px;color:#2a2a2a;white-space:nowrap;transform:scaleX(0.9500);transform-origin:0 0;">OK</div>
<div style="position:absolute;left:705px;top:388.92px;font-size:10.21px;line-height:10.21px;color:#2a2a2a;white-space:nowrap;transform:scaleX(0.9500);transform-origin:0 0;">29-VR P2Mem Zone</div>
<div style="position:absolute;left:805px;top:388.92px;font-size:10.21px;line-height:10.21px;color:#2a2a2a;white-space:nowrap;transform:scaleX(0.9500);transform-origin:0 0;">System</div>
<div style="position:absolute;left:875px;top:388.92px;font-size:10.21px;line-height:10.21px;color:#2a2a2a;white-space:nowrap;transform:scaleX(0.9500);transform-origin:0 0;">1</div>
<div style="position:absolute;left:897px;top:388.92px;font-size:10.21px;line-height:10.21px;color:#2a2a2a;white-space:nowrap;transform:scaleX(0.9500);transform-origin:0 0;">0</div>
<div style="position:absolute;left:967px;top:388.92px;font-size:10.21px;line-height:10.21px;color:#2a2a2a;white-space:nowrap;transform:scaleX(0.9500);transform-origin:0 0;">32C</div>
<div style="position:absolute;left:1019px;top:388.92px;font-size:10.21px;line-height:10.21px;color:#2a2a2a;white-space:nowrap;transform:scaleX(0.9500);transform-origin:0 0;">Caution: 70C; Critical: 75C</div>
<svg style="position:absolute;left:919px;top:388.2px" width="11" height="11"><circle cx="5.5" cy="5.5" r="5.2" fill="#19a985"/><path d="M3 5.6 L4.9 7.4 L8.1 4" fill="none" stroke="#fff" stroke-width="1.5"/></svg>
<div style="position:absolute;left:932px;top:388.92px;font-size:10.21px;line-height:10.21px;color:#2a2a2a;white-space:nowrap;transform:scaleX(0.9500);transform-origin:0 0;">OK</div>
<div style="position:absolute;left:705px;top:402.42px;font-size:10.21px;line-height:10.21px;color:#2a2a2a;white-space:nowrap;transform:scaleX(0.9500);transform-origin:0 0;">30-VR P2Mem Zone</div>
<div style="position:absolute;left:805px;top:402.42px;font-size:10.21px;line-height:10.21px;color:#2a2a2a;white-space:nowrap;transform:scaleX(0.9500);transform-origin:0 0;">System</div>
<div style="position:absolute;left:875px;top:402.42px;font-size:10.21px;line-height:10.21px;color:#2a2a2a;white-space:nowrap;transform:scaleX(0.9500);transform-origin:0 0;">5</div>
<div style="position:absolute;left:897px;top:402.42px;font-size:10.21px;line-height:10.21px;color:#2a2a2a;white-space:nowrap;transform:scaleX(0.9500);transform-origin:0 0;">0</div>
<div style="position:absolute;left:967px;top:402.42px;font-size:10.21px;line-height:10.21px;color:#2a2a2a;white-space:nowrap;transform:scaleX(0.9500);transform-origin:0 0;">30C</div>
<div style="position:absolute;left:1019px;top:402.42px;font-size:10.21px;line-height:10.21px;color:#2a2a2a;white-space:nowrap;transform:scaleX(0.9500);transform-origin:0 0;">Caution: 70C; Critical: 75C</div>
<svg style="position:absolute;left:919px;top:401.7px" width="11" height="11"><circle cx="5.5" cy="5.5" r="5.2" fill="#19a985"/><path d="M3 5.6 L4.9 7.4 L8.1 4" fill="none" stroke="#fff" stroke-width="1.5"/></svg>
<div style="position:absolute;left:932px;top:402.42px;font-size:10.21px;line-height:10.21px;color:#2a2a2a;white-space:nowrap;transform:scaleX(0.9500);transform-origin:0 0;">OK</div>
<div style="position:absolute;left:705px;top:415.92px;font-size:10.21px;line-height:10.21px;color:#2a2a2a;white-space:nowrap;transform:scaleX(0.9500);transform-origin:0 0;">31-HD Controller</div>
<div style="position:absolute;left:805px;top:415.92px;font-size:10.21px;line-height:10.21px;color:#2a2a2a;white-space:nowrap;transform:scaleX(0.9500);transform-origin:0 0;">System</div>
<div style="position:absolute;left:875px;top:415.92px;font-size:10.21px;line-height:10.21px;color:#2a2a2a;white-space:nowrap;transform:scaleX(0.9500);transform-origin:0 0;">12</div>
<div style="position:absolute;left:897px;top:415.92px;font-size:10.21px;line-height:10.21px;color:#2a2a2a;white-space:nowrap;transform:scaleX(0.9500);transform-origin:0 0;">10</div>
<div style="position:absolute;left:967px;top:415.92px;font-size:10.21px;line-height:10.21px;color:#2a2a2a;white-space:nowrap;transform:scaleX(0.9500);transform-origin:0 0;">124C</div>
<div style="position:absolute;left:1019px;top:415.92px;font-size:10.21px;line-height:10.21px;color:#2a2a2a;white-space:nowrap;transform:scaleX(0.9500);transform-origin:0 0;">Caution: 105C; Critical: N/A</div>
<svg style="position:absolute;left:919.5px;top:415.3px" width="10" height="10"><path d="M5 0.3 L9.7 5 L5 9.7 L0.3 5Z" fill="#e4633c"/><path d="M3.6 3.6 L6.4 6.4 M6.4 3.6 L3.6 6.4" stroke="#fff" stroke-width="1"/></svg>
<div style="position:absolute;left:931px;top:415.92px;font-size:10.21px;line-height:10.21px;color:#222;white-space:nowrap;transform:scaleX(0.9500);transform-origin:0 0;">Critical</div>
<div style="position:absolute;left:705px;top:429.42px;font-size:10.21px;line-height:10.21px;color:#2a2a2a;white-space:nowrap;transform:scaleX(0.9500);transform-origin:0 0;">32-HD Cntlr Zone</div>
<div style="position:absolute;left:805px;top:429.42px;font-size:10.21px;line-height:10.21px;color:#2a2a2a;white-space:nowrap;transform:scaleX(0.9500);transform-origin:0 0;">System</div>
<div style="position:absolute;left:875px;top:429.42px;font-size:10.21px;line-height:10.21px;color:#2a2a2a;white-space:nowrap;transform:scaleX(0.9500);transform-origin:0 0;">12</div>
<div style="position:absolute;left:897px;top:429.42px;font-size:10.21px;line-height:10.21px;color:#2a2a2a;white-space:nowrap;transform:scaleX(0.9500);transform-origin:0 0;">11</div>
<div style="position:absolute;left:967px;top:429.42px;font-size:10.21px;line-height:10.21px;color:#2a2a2a;white-space:nowrap;transform:scaleX(0.9500);transform-origin:0 0;">44C</div>
<div style="position:absolute;left:1019px;top:429.42px;font-size:10.21px;line-height:10.21px;color:#2a2a2a;white-space:nowrap;transform:scaleX(0.9500);transform-origin:0 0;">Caution: 65C; Critical: 70C</div>
<svg style="position:absolute;left:919px;top:428.7px" width="11" height="11"><circle cx="5.5" cy="5.5" r="5.2" fill="#19a985"/><path d="M3 5.6 L4.9 7.4 L8.1 4" fill="none" stroke="#fff" stroke-width="1.5"/></svg>
<div style="position:absolute;left:932px;top:429.42px;font-size:10.21px;line-height:10.21px;color:#2a2a2a;white-space:nowrap;transform:scaleX(0.9500);transform-origin:0 0;">OK</div>
<div style="position:absolute;left:705px;top:442.92px;font-size:10.21px;line-height:10.21px;color:#2a2a2a;white-space:nowrap;transform:scaleX(0.9500);transform-origin:0 0;">33-PCI 1 Zone</div>
<div style="position:absolute;left:805px;top:442.92px;font-size:10.21px;line-height:10.21px;color:#2a2a2a;white-space:nowrap;transform:scaleX(0.9500);transform-origin:0 0;">System</div>
<div style="position:absolute;left:875px;top:442.92px;font-size:10.21px;line-height:10.21px;color:#2a2a2a;white-space:nowrap;transform:scaleX(0.9500);transform-origin:0 0;">8</div>
<div style="position:absolute;left:897px;top:442.92px;font-size:10.21px;line-height:10.21px;color:#2a2a2a;white-space:nowrap;transform:scaleX(0.9500);transform-origin:0 0;">12</div>
<div style="position:absolute;left:967px;top:442.92px;font-size:10.21px;line-height:10.21px;color:#2a2a2a;white-space:nowrap;transform:scaleX(0.9500);transform-origin:0 0;">36C</div>
<div style="position:absolute;left:1019px;top:442.92px;font-size:10.21px;line-height:10.21px;color:#2a2a2a;white-space:nowrap;transform:scaleX(0.9500);transform-origin:0 0;">Caution: 70C; Critical: 75C</div>
<svg style="position:absolute;left:919px;top:442.2px" width="11" height="11"><circle cx="5.5" cy="5.5" r="5.2" fill="#19a985"/><path d="M3 5.6 L4.9 7.4 L8.1 4" fill="none" stroke="#fff" stroke-width="1.5"/></svg>
<div style="position:absolute;left:932px;top:442.92px;font-size:10.21px;line-height:10.21px;color:#2a2a2a;white-space:nowrap;transform:scaleX(0.9500);transform-origin:0 0;">OK</div>
<div style="position:absolute;left:705px;top:456.42px;font-size:10.21px;line-height:10.21px;color:#2a2a2a;white-space:nowrap;transform:scaleX(0.9500);transform-origin:0 0;">34-PCI 1 Zone</div>
<div style="position:absolute;left:805px;top:456.42px;font-size:10.21px;line-height:10.21px;color:#2a2a2a;white-space:nowrap;transform:scaleX(0.9500);transform-origin:0 0;">System</div>
<div style="position:absolute;left:875px;top:456.42px;font-size:10.21px;line-height:10.21px;color:#2a2a2a;white-space:nowrap;transform:scaleX(0.9500);transform-origin:0 0;">10</div>
<div style="position:absolute;left:897px;top:456.42px;font-size:10.21px;line-height:10.21px;color:#2a2a2a;white-space:nowrap;transform:scaleX(0.9500);transform-origin:0 0;">13</div>
<div style="position:absolute;left:967px;top:456.42px;font-size:10.21px;line-height:10.21px;color:#2a2a2a;white-space:nowrap;transform:scaleX(0.9500);transform-origin:0 0;">36C</div>
<div style="position:absolute;left:1019px;top:456.42px;font-size:10.21px;line-height:10.21px;color:#2a2a2a;white-space:nowrap;transform:scaleX(0.9500);transform-origin:0 0;">Caution: 66C; Critical: 71C</div>
<svg style="position:absolute;left:919px;top:455.7px" width="11" height="11"><circle cx="5.5" cy="5.5" r="5.2" fill="#19a985"/><path d="M3 5.6 L4.9 7.4 L8.1 4" fill="none" stroke="#fff" stroke-width="1.5"/></svg>
<div style="position:absolute;left:932px;top:456.42px;font-size:10.21px;line-height:10.21px;color:#2a2a2a;white-space:nowrap;transform:scaleX(0.9500);transform-origin:0 0;">OK</div>
<div style="position:absolute;left:705px;top:469.92px;font-size:10.21px;line-height:10.21px;color:#2a2a2a;white-space:nowrap;transform:scaleX(0.9500);transform-origin:0 0;">36-PCI 2 Zone</div>
<div style="position:absolute;left:805px;top:469.92px;font-size:10.21px;line-height:10.21px;color:#2a2a2a;white-space:nowrap;transform:scaleX(0.9500);transform-origin:0 0;">System</div>
<div style="position:absolute;left:875px;top:469.92px;font-size:10.21px;line-height:10.21px;color:#2a2a2a;white-space:nowrap;transform:scaleX(0.9500);transform-origin:0 0;">14</div>
<div style="position:absolute;left:897px;top:469.92px;font-size:10.21px;line-height:10.21px;color:#2a2a2a;white-space:nowrap;transform:scaleX(0.9500);transform-origin:0 0;">10</div>
<div style="position:absolute;left:967px;top:469.92px;font-size:10.21px;line-height:10.21px;color:#2a2a2a;white-space:nowrap;transform:scaleX(0.9500);transform-origin:0 0;">43C</div>
<div style="position:absolute;left:1019px;top:469.92px;font-size:10.21px;line-height:10.21px;color:#2a2a2a;white-space:nowrap;transform:scaleX(0.9500);transform-origin:0 0;">Caution: 65C; Critical: 70C</div>
<svg style="position:absolute;left:919px;top:469.2px" width="11" height="11"><circle cx="5.5" cy="5.5" r="5.2" fill="#19a985"/><path d="M3 5.6 L4.9 7.4 L8.1 4" fill="none" stroke="#fff" stroke-width="1.5"/></svg>
<div style="position:absolute;left:932px;top:469.92px;font-size:10.21px;line-height:10.21px;color:#2a2a2a;white-space:nowrap;transform:scaleX(0.9500);transform-origin:0 0;">OK</div>
<div style="position:absolute;left:705px;top:483.42px;font-size:10.21px;line-height:10.21px;color:#2a2a2a;white-space:nowrap;transform:scaleX(0.9500);transform-origin:0 0;">37-System Board</div>
<div style="position:absolute;left:805px;top:483.42px;font-size:10.21px;line-height:10.21px;color:#2a2a2a;white-space:nowrap;transform:scaleX(0.9500);transform-origin:0 0;">System</div>
<div style="position:absolute;left:875px;top:483.42px;font-size:10.21px;line-height:10.21px;color:#2a2a2a;white-space:nowrap;transform:scaleX(0.9500);transform-origin:0 0;">12</div>
<div style="position:absolute;left:897px;top:483.42px;font-size:10.21px;line-height:10.21px;color:#2a2a2a;white-space:nowrap;transform:scaleX(0.9500);transform-origin:0 0;">6</div>
<div style="position:absolute;left:967px;top:483.42px;font-size:10.21px;line-height:10.21px;color:#2a2a2a;white-space:nowrap;transform:scaleX(0.9500);transform-origin:0 0;">36C</div>
<div style="position:absolute;left:1019px;top:483.42px;font-size:10.21px;line-height:10.21px;color:#2a2a2a;white-space:nowrap;transform:scaleX(0.9500);transform-origin:0 0;">Caution: 70C; Critical: 75C</div>
<svg style="position:absolute;left:919px;top:482.7px" width="11" height="11"><circle cx="5.5" cy="5.5" r="5.2" fill="#19a985"/><path d="M3 5.6 L4.9 7.4 L8.1 4" fill="none" stroke="#fff" stroke-width="1.5"/></svg>
<div style="position:absolute;left:932px;top:483.42px;font-size:10.21px;line-height:10.21px;color:#2a2a2a;white-space:nowrap;transform:scaleX(0.9500);transform-origin:0 0;">OK</div>
<div style="position:absolute;left:705px;top:496.92px;font-size:10.21px;line-height:10.21px;color:#2a2a2a;white-space:nowrap;transform:scaleX(0.9500);transform-origin:0 0;">38-System Board</div>
<div style="position:absolute;left:805px;top:496.92px;font-size:10.21px;line-height:10.21px;color:#2a2a2a;white-space:nowrap;transform:scaleX(0.9500);transform-origin:0 0;">System</div>
<div style="position:absolute;left:875px;top:496.92px;font-size:10.21px;line-height:10.21px;color:#2a2a2a;white-space:nowrap;transform:scaleX(0.9500);transform-origin:0 0;">4</div>
<div style="position:absolute;left:897px;top:496.92px;font-size:10.21px;line-height:10.21px;color:#2a2a2a;white-space:nowrap;transform:scaleX(0.9500);transform-origin:0 0;">6</div>
<div style="position:absolute;left:967px;top:496.92px;font-size:10.21px;line-height:10.21px;color:#2a2a2a;white-space:nowrap;transform:scaleX(0.9500);transform-origin:0 0;">36C</div>
<div style="position:absolute;left:1019px;top:496.92px;font-size:10.21px;line-height:10.21px;color:#2a2a2a;white-space:nowrap;transform:scaleX(0.9500);transform-origin:0 0;">Caution: 70C; Critical: 75C</div>
<svg style="position:absolute;left:919px;top:496.2px" width="11" height="11"><circle cx="5.5" cy="5.5" r="5.2" fill="#19a985"/><path d="M3 5.6 L4.9 7.4 L8.1 4" fill="none" stroke="#fff" stroke-width="1.5"/></svg>
<div style="position:absolute;left:932px;top:496.92px;font-size:10.21px;line-height:10.21px;color:#2a2a2a;white-space:nowrap;transform:scaleX(0.9500);transform-origin:0 0;">OK</div>
<div style="position:absolute;left:705px;top:510.42px;font-size:10.21px;line-height:10.21px;color:#2a2a2a;white-space:nowrap;transform:scaleX(0.9500);transform-origin:0 0;">39-Sys Exhaust</div>
<div style="position:absolute;left:805px;top:510.42px;font-size:10.21px;line-height:10.21px;color:#2a2a2a;white-space:nowrap;transform:scaleX(0.9500);transform-origin:0 0;">System</div>
<div style="position:absolute;left:875px;top:510.42px;font-size:10.21px;line-height:10.21px;color:#2a2a2a;white-space:nowrap;transform:scaleX(0.9500);transform-origin:0 0;">8</div>
<div style="position:absolute;left:897px;top:510.42px;font-size:10.21px;line-height:10.21px;color:#2a2a2a;white-space:nowrap;transform:scaleX(0.9500);transform-origin:0 0;">14</div>
<div style="position:absolute;left:967px;top:510.42px;font-size:10.21px;line-height:10.21px;color:#2a2a2a;white-space:nowrap;transform:scaleX(0.9500);transform-origin:0 0;">36C</div>
<div style="position:absolute;left:1019px;top:510.42px;font-size:10.21px;line-height:10.21px;color:#2a2a2a;white-space:nowrap;transform:scaleX(0.9500);transform-origin:0 0;">Caution: 70C; Critical: 75C</div>
<svg style="position:absolute;left:919px;top:509.7px" width="11" height="11"><circle cx="5.5" cy="5.5" r="5.2" fill="#19a985"/><path d="M3 5.6 L4.9 7.4 L8.1 4" fill="none" stroke="#fff" stroke-width="1.5"/></svg>
<div style="position:absolute;left:932px;top:510.42px;font-size:10.21px;line-height:10.21px;color:#2a2a2a;white-space:nowrap;transform:scaleX(0.9500);transform-origin:0 0;">OK</div>
<div style="position:absolute;left:705px;top:523.92px;font-size:10.21px;line-height:10.21px;color:#2a2a2a;white-space:nowrap;transform:scaleX(0.9500);transform-origin:0 0;">40-Sys Exhaust</div>
<div style="position:absolute;left:805px;top:523.92px;font-size:10.21px;line-height:10.21px;color:#2a2a2a;white-space:nowrap;transform:scaleX(0.9500);transform-origin:0 0;">System</div>
<div style="position:absolute;left:875px;top:523.92px;font-size:10.21px;line-height:10.21px;color:#2a2a2a;white-space:nowrap;transform:scaleX(0.9500);transform-origin:0 0;">11</div>
<div style="position:absolute;left:897px;top:523.92px;font-size:10.21px;line-height:10.21px;color:#2a2a2a;white-space:nowrap;transform:scaleX(0.9500);transform-origin:0 0;">14</div>
<div style="position:absolute;left:967px;top:523.92px;font-size:10.21px;line-height:10.21px;color:#2a2a2a;white-space:nowrap;transform:scaleX(0.9500);transform-origin:0 0;">36C</div>
<div style="position:absolute;left:1019px;top:523.92px;font-size:10.21px;line-height:10.21px;color:#2a2a2a;white-space:nowrap;transform:scaleX(0.9500);transform-origin:0 0;">Caution: 70C; Critical: 75C</div>
<svg style="position:absolute;left:919px;top:523.2px" width="11" height="11"><circle cx="5.5" cy="5.5" r="5.2" fill="#19a985"/><path d="M3 5.6 L4.9 7.4 L8.1 4" fill="none" stroke="#fff" stroke-width="1.5"/></svg>
<div style="position:absolute;left:932px;top:523.92px;font-size:10.21px;line-height:10.21px;color:#2a2a2a;white-space:nowrap;transform:scaleX(0.9500);transform-origin:0 0;">OK</div>
<div style="position:absolute;left:705px;top:537.42px;font-size:10.21px;line-height:10.21px;color:#2a2a2a;white-space:nowrap;transform:scaleX(0.9500);transform-origin:0 0;">41-Sys Exhaust</div>
<div style="position:absolute;left:805px;top:537.42px;font-size:10.21px;line-height:10.21px;color:#2a2a2a;white-space:nowrap;transform:scaleX(0.9500);transform-origin:0 0;">System</div>
<div style="position:absolute;left:875px;top:537.42px;font-size:10.21px;line-height:10.21px;color:#2a2a2a;white-space:nowrap;transform:scaleX(0.9500);transform-origin:0 0;">11</div>
<div style="position:absolute;left:897px;top:537.42px;font-size:10.21px;line-height:10.21px;color:#2a2a2a;white-space:nowrap;transform:scaleX(0.9500);transform-origin:0 0;">15</div>
<div style="position:absolute;left:967px;top:537.42px;font-size:10.21px;line-height:10.21px;color:#2a2a2a;white-space:nowrap;transform:scaleX(0.9500);transform-origin:0 0;">36C</div>
<div style="position:absolute;left:1019px;top:537.42px;font-size:10.21px;line-height:10.21px;color:#2a2a2a;white-space:nowrap;transform:scaleX(0.9500);transform-origin:0 0;">Caution: 64C; Critical: 69C</div>
<svg style="position:absolute;left:919px;top:536.7px" width="11" height="11"><circle cx="5.5" cy="5.5" r="5.2" fill="#19a985"/><path d="M3 5.6 L4.9 7.4 L8.1 4" fill="none" stroke="#fff" stroke-width="1.5"/></svg>
<div style="position:absolute;left:932px;top:537.42px;font-size:10.21px;line-height:10.21px;color:#2a2a2a;white-space:nowrap;transform:scaleX(0.9500);transform-origin:0 0;">OK</div>
<div style="position:absolute;left:705px;top:550.92px;font-size:10.21px;line-height:10.21px;color:#2a2a2a;white-space:nowrap;transform:scaleX(0.9500);transform-origin:0 0;">42-SuperCAP Max</div>
<div style="position:absolute;left:805px;top:550.92px;font-size:10.21px;line-height:10.21px;color:#2a2a2a;white-space:nowrap;transform:scaleX(0.9500);transform-origin:0 0;">System</div>
<div style="position:absolute;left:875px;top:550.92px;font-size:10.21px;line-height:10.21px;color:#2a2a2a;white-space:nowrap;transform:scaleX(0.9500);transform-origin:0 0;">11</div>
<div style="position:absolute;left:897px;top:550.92px;font-size:10.21px;line-height:10.21px;color:#2a2a2a;white-space:nowrap;transform:scaleX(0.9500);transform-origin:0 0;">1</div>
<div style="position:absolute;left:967px;top:550.92px;font-size:10.21px;line-height:10.21px;color:#2a2a2a;white-space:nowrap;transform:scaleX(0.9500);transform-origin:0 0;">28C</div>
<div style="position:absolute;left:1019px;top:550.92px;font-size:10.21px;line-height:10.21px;color:#2a2a2a;white-space:nowrap;transform:scaleX(0.9500);transform-origin:0 0;">Caution: 65C; Critical: N/A</div>
<svg style="position:absolute;left:919px;top:550.2px" width="11" height="11"><circle cx="5.5" cy="5.5" r="5.2" fill="#19a985"/><path d="M3 5.6 L4.9 7.4 L8.1 4" fill="none" stroke="#fff" stroke-width="1.5"/></svg>
<div style="position:absolute;left:932px;top:550.92px;font-size:10.21px;line-height:10.21px;color:#2a2a2a;white-space:nowrap;transform:scaleX(0.9500);transform-origin:0 0;">OK</div>
<div class="a" style="left:1175px;top:88px;width:13px;height:482px;background:#f3f3f3"></div>
<div class="a" style="left:1177px;top:197px;width:9.5px;height:325px;background:#c3c3c3"></div>
<svg class="a" style="left:1176px;top:90px" width="11" height="8"><path d="M2.5 6 L5.5 2.5 L8.5 6Z" fill="#333"/></svg>
<svg class="a" style="left:1176px;top:560px" width="11" height="8"><path d="M2.5 2 L5.5 5.5 L8.5 2Z" fill="#333"/></svg>
<svg class="a" style="left:1014px;top:583px" width="16" height="16"><circle cx="8" cy="9" r="6.5" fill="#f4c542"/><path d="M8 1 V5" stroke="#f4c542" stroke-width="1.5"/></svg>
<div style="position:absolute;left:1033.3px;top:587.08px;font-size:8.85px;line-height:8.85px;color:#fff;font-weight:bold;white-space:nowrap;">POWER: OFF</div>
<svg class="a" style="left:1105px;top:583px" width="14" height="17"><path d="M7 1.5 C3.5 1.5 2 4 2 6 C2 8.5 4.5 10 5 12 L5 16 M9 16 L9 12 C9.5 10 12 8.5 12 6 C12 4 10.5 1.5 7 1.5" fill="none" stroke="#fff" stroke-width="1"/></svg>
<div style="position:absolute;left:1123px;top:587.08px;font-size:8.85px;line-height:8.85px;color:#fff;font-weight:bold;white-space:nowrap;">UID: OFF</div>
<svg class="a" style="left:1182px;top:583px" width="16" height="16"><path d="M8 1 L15 8 L8 15 L1 8Z" fill="#e4633c"/><path d="M5.5 5.5 L10.5 10.5 M10.5 5.5 L5.5 10.5" stroke="#fff" stroke-width="1.5"/></svg>
<svg class="a" style="left:0;top:0" width="1200" height="600"><g fill="none" stroke="#1c1c1c" stroke-width="0.9"><path d="M102,453.6 L66,488.4 L144,564 C156,576 166,582 178,582 C212,580 236,552 234,522 C233,505 226,494 214,482 L180,454.5 L145,489.6 L179,523 C182,526 180,530 176,527 Z"/><path d="M0,472 L21,451.5 L133.5,563.4 L97,600"/><path d="M17,527 C15,524 17,520 20,523 L60,563.4 L22,600 M17,527 L55,565 L18,600"/><path d="M0,432 L13.5,444 L0,457.5"/><path d="M0,243 C70,238 180,244 228,240 C262,236 290,220 305,201 C313,215 313,250 305,276 C300,290 290,302 281,310 C295,318 310,330 317,350 C322,372 320,420 306,446 C302,460 298,470 295.4,479"/><path d="M0,335.5 C80,337 160,355 225,387.5 C260,407 285,445 295.4,479"/><path d="M286,600 C288,570 295,520 302.8,496.7 C308,520 312,560 313.8,600"/><path d="M291,310 C305,290 318,262 327,251 C335,270 336,284 345,292 C365,300 384,306 379,316 C374,326 350,330 325,328 C310,326 298,318 291,310 Z"/><path d="M875,0 C866,40 866,110 878,150 M908,0 C893,40 880,100 878,150"/><path d="M882,162 C905,200 930,235 980,268 C1030,296 1100,310 1200,308"/><path d="M882,162 C868,200 860,245 860,270 C858,285 842,290 838,305 C835,318 815,328 803,333 C818,338 835,345 840,358 C845,372 848,382 850,390 C858,375 868,362 875,355 C885,345 895,338 900,332 C885,318 872,300 868,280"/><path d="M900,332 C880,350 864,400 876,441 C890,420 910,408 940,405 C1000,403 1100,406 1200,396"/><path d="M956.5,36 L991,70 L956.5,104 L922,70 Z"/><path d="M1024,38 L1057,70.7 L1024,104 L990.7,70.7 Z"/><path d="M1096,51 L1138,92 L1027,189 C1012,196 990,196 981,184 C972,176 972,174 975,171 Z"/><path d="M1132,96 L1048,168"/><path d="M1150,0 C1120,18 1108,45 1116,66 C1126,90 1150,104 1170,118 L1200,86"/><path d="M1124,78 L1200,150"/><path d="M1174,121 L1200,147"/><path d="M1136,164 C1133,161 1137,158 1140,161 L1168,202 L1134,238 M1136,166 L1162,202 L1130,236"/><path d="M1170,44 C1168,41 1172,38 1175,41 L1200,68 M1170,46 L1200,78"/><path d="M1115,135 C1095,145 1084,160 1084,172 C1086,192 1100,210 1132,238"/><path d="M125,600 L138,587.3 L151,600 M191,600 L204,587.3 L217,600"/><circle cx="369" cy="251" r="15"/><circle cx="405" cy="308" r="14"/><circle cx="369" cy="376" r="15"/><circle cx="810" cy="265" r="15"/><circle cx="772.5" cy="330" r="17.5"/><circle cx="810" cy="393" r="15"/></g></svg>
</body></html>
